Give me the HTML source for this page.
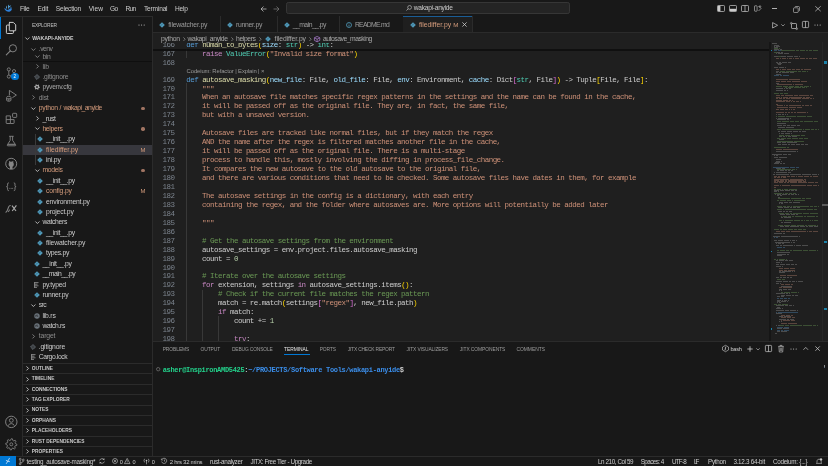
<!DOCTYPE html>
<html><head><meta charset="utf-8"><style>
html,body{margin:0;padding:0;width:828px;height:466px;overflow:hidden;background:#181818;}
body{position:relative;font-family:'Liberation Sans', sans-serif;}
svg{overflow:visible}
</style></head><body><div style="position:absolute;left:0;top:0;width:828px;height:466px;will-change:transform;overflow:hidden">
<div style="position:absolute;left:0px;top:0px;width:828px;height:16px;background:#181818;"></div><div style="position:absolute;left:0px;top:15.8px;width:828px;height:0.9px;background:#2b2b2b;"></div><div style="position:absolute;left:21.5px;top:16px;width:0.7px;height:440px;background:#2b2b2b;"></div><div style="position:absolute;left:152px;top:16px;width:0.8px;height:440px;background:#2b2b2b;"></div><div style="position:absolute;left:153px;top:32px;width:675px;height:309px;background:#1f1f1f;"></div><div style="position:absolute;left:153px;top:16px;width:675px;height:16px;background:#181818;"></div><div style="position:absolute;left:153px;top:31.5px;width:675px;height:0.7px;background:#2b2b2b;"></div><div style="position:absolute;left:153px;top:341px;width:675px;height:115px;background:#181818;"></div><div style="position:absolute;left:153px;top:340.6px;width:675px;height:0.7px;background:#2b2b2b;"></div><div style="position:absolute;left:0px;top:456px;width:828px;height:10px;background:#181818;"></div><div style="position:absolute;left:0px;top:455.6px;width:828px;height:0.6px;background:#2b2b2b;"></div><svg style="position:absolute;left:2px;top:2px;" width="12" height="12" viewBox="0 0 12 12"><path d="M2.2 6.2 Q3.2 6 4.2 7.2 Q5.2 8.4 6.6 7.6 L8.2 6.6 Q9.2 6 10 6.8 Q9.6 8.8 8 9.4 Q6.2 10 4.6 9.2 Q2.8 8.2 2.2 6.2 Z" fill="#2d7fd8"/><path d="M4.2 3.6 Q5 4.6 4.9 6.6 L4.1 6.4 Q3.9 5 4.2 3.6 Z" fill="#5fb0e8"/><path d="M6.2 2.6 Q7.4 3.4 7.2 6.2 L6.4 6.8 Q6 4.6 6.2 2.6 Z" fill="#5fb0e8"/><path d="M6.8 4.2 Q8.2 3.4 9.2 3.6 Q8.6 4.8 7.2 5.2 Z" fill="#4aa0e0"/><path d="M8.4 5.2 Q9.6 5 9.8 6 L8.6 6.6 Z" fill="#3b8fdc"/></svg><div style="position:absolute;left:19.9px;top:3.60px;height:10px;line-height:10px;font-size:6.6px;color:#cccccc;font-weight:400;font-family:'Liberation Sans', sans-serif;white-space:pre;letter-spacing:-0.312px;">File</div><div style="position:absolute;left:37.4px;top:3.60px;height:10px;line-height:10px;font-size:6.6px;color:#cccccc;font-weight:400;font-family:'Liberation Sans', sans-serif;white-space:pre;letter-spacing:-0.158px;">Edit</div><div style="position:absolute;left:55.8px;top:3.60px;height:10px;line-height:10px;font-size:6.6px;color:#cccccc;font-weight:400;font-family:'Liberation Sans', sans-serif;white-space:pre;letter-spacing:-0.219px;">Selection</div><div style="position:absolute;left:88.8px;top:3.60px;height:10px;line-height:10px;font-size:6.6px;color:#cccccc;font-weight:400;font-family:'Liberation Sans', sans-serif;white-space:pre;letter-spacing:0.004px;">View</div><div style="position:absolute;left:109.9px;top:3.60px;height:10px;line-height:10px;font-size:6.6px;color:#cccccc;font-weight:400;font-family:'Liberation Sans', sans-serif;white-space:pre;letter-spacing:-0.604px;">Go</div><div style="position:absolute;left:125.6px;top:3.60px;height:10px;line-height:10px;font-size:6.6px;color:#cccccc;font-weight:400;font-family:'Liberation Sans', sans-serif;white-space:pre;letter-spacing:-0.754px;">Run</div><div style="position:absolute;left:144px;top:3.60px;height:10px;line-height:10px;font-size:6.6px;color:#cccccc;font-weight:400;font-family:'Liberation Sans', sans-serif;white-space:pre;letter-spacing:-0.192px;">Terminal</div><div style="position:absolute;left:174.9px;top:3.60px;height:10px;line-height:10px;font-size:6.6px;color:#cccccc;font-weight:400;font-family:'Liberation Sans', sans-serif;white-space:pre;letter-spacing:-0.191px;">Help</div><svg style="position:absolute;left:260px;top:5.5px;" width="7" height="6" viewBox="0 0 7 6"><path d="M6.5 3 H1 M3.5 0.5 L1 3 L3.5 5.5" stroke="#cccccc" stroke-width="0.7" fill="none"/></svg><svg style="position:absolute;left:272.5px;top:5.5px;" width="7" height="6" viewBox="0 0 7 6"><path d="M0.5 3 H6 M3.5 0.5 L6 3 L3.5 5.5" stroke="#7f7f7f" stroke-width="0.7" fill="none"/></svg><div style="position:absolute;left:286.2px;top:2.1px;width:283.7px;height:11.9px;background:#242424;border:0.6px solid #363636;border-radius:2.2px;box-sizing:border-box;"></div><svg style="position:absolute;left:405.5px;top:5.2px;" width="6" height="6" viewBox="0 0 6 6"><circle cx="3.6" cy="2.4" r="1.9" stroke="#cccccc" stroke-width="0.6" fill="none"/><path d="M2.2 3.8 L0.5 5.5" stroke="#cccccc" stroke-width="0.7"/></svg><div style="position:absolute;left:413.8px;top:3.40px;height:10px;line-height:10px;font-size:6.6px;color:#cccccc;font-weight:400;font-family:'Liberation Sans', sans-serif;white-space:pre;letter-spacing:-0.249px;">wakapi-anyide</div><svg style="position:absolute;left:716.8px;top:5px;" width="8" height="7" viewBox="0 0 8 7"><rect x="0.5" y="0.5" width="7" height="6" rx="0.8" stroke="#cccccc" stroke-width="0.7" fill="none"/><rect x="0.8" y="0.8" width="2.6" height="5.4" fill="#cccccc"/></svg><svg style="position:absolute;left:729px;top:5px;" width="8" height="7" viewBox="0 0 8 7"><rect x="0.5" y="0.5" width="7" height="6" rx="0.8" stroke="#cccccc" stroke-width="0.7" fill="none"/><rect x="0.8" y="3.8" width="6.4" height="2.4" fill="#cccccc"/></svg><svg style="position:absolute;left:741.3px;top:5px;" width="8" height="7" viewBox="0 0 8 7"><rect x="0.5" y="0.5" width="7" height="6" rx="0.8" stroke="#cccccc" stroke-width="0.7" fill="none"/><path d="M4 0.5 V6.5" stroke="#cccccc" stroke-width="0.7"/></svg><svg style="position:absolute;left:754px;top:5px;" width="8" height="7" viewBox="0 0 8 7"><rect x="0.5" y="0.8" width="2.6" height="5.4" rx="0.5" stroke="#cccccc" stroke-width="0.6" fill="none"/><path d="M4.5 1 L7 3.5 L4.5 6" stroke="#cccccc" stroke-width="0.6" fill="none"/><circle cx="6" cy="1.5" r="0.8" stroke="#cccccc" stroke-width="0.5" fill="none"/></svg><div style="position:absolute;left:771.8px;top:8.2px;width:5.5px;height:0.5px;background:#b0b0b0;"></div><svg style="position:absolute;left:792.8px;top:5.5px;" width="7" height="7" viewBox="0 0 7 7"><rect x="0.5" y="1.8" width="4.7" height="4.7" rx="0.8" stroke="#cccccc" stroke-width="0.6" fill="none"/><path d="M1.8 1.2 Q2 0.5 2.8 0.5 H5.5 Q6.5 0.5 6.5 1.5 V4.2 Q6.5 5 5.8 5.2" stroke="#cccccc" stroke-width="0.6" fill="none"/></svg><svg style="position:absolute;left:815px;top:6px;" width="6" height="5.5" viewBox="0 0 6 5.5"><path d="M0.3 0.3 L5.7 5.2 M5.7 0.3 L0.3 5.2" stroke="#cccccc" stroke-width="0.7"/></svg><div style="position:absolute;left:0px;top:16.8px;width:1px;height:22.2px;background:#0078d4;"></div><svg style="position:absolute;left:3px;top:20px;" width="18" height="18" viewBox="0 0 18 18"><path d="M6.3 2.4 H10.3 L12.7 4.8 V10.2 Q12.7 10.8 12.1 10.8 H6.9 Q6.3 10.8 6.3 10.2 V3 Q6.3 2.4 6.9 2.4 Z" stroke="#d7d7d7" stroke-width="0.95" fill="none" stroke-linejoin="round"/><path d="M6.3 5.1 H4.2 Q3.4 5.1 3.4 5.9 V12.7 Q3.4 13.5 4.2 13.5 H9.6 Q10.4 13.5 10.4 12.7 V10.8" stroke="#d7d7d7" stroke-width="0.95" fill="none"/></svg><svg style="position:absolute;left:3px;top:42px;" width="18" height="18" viewBox="0 0 18 18"><circle cx="9.9" cy="6.3" r="3.6" stroke="#868686" stroke-width="0.95" fill="none"/><path d="M7.3 8.9 L3.3 12.9" stroke="#868686" stroke-width="1.05" stroke-linecap="round"/></svg><svg style="position:absolute;left:3px;top:64px;" width="18" height="18" viewBox="0 0 18 18"><circle cx="5.8" cy="5.4" r="1.55" stroke="#868686" stroke-width="0.85" fill="none"/><circle cx="5.8" cy="12.6" r="1.55" stroke="#868686" stroke-width="0.85" fill="none"/><circle cx="11" cy="7.1" r="1.55" stroke="#868686" stroke-width="0.85" fill="none"/><path d="M5.8 6.95 V11.05 M11 8.65 Q11 10.6 7.2 11.8" stroke="#868686" stroke-width="0.85" fill="none"/></svg><div style="position:absolute;left:11.3px;top:72.7px;width:7.4px;height:7.4px;border-radius:50%;background:#0078d4;"></div><div style="position:absolute;left:13.4px;top:73.60px;height:6px;line-height:6px;font-size:4.6px;color:#ffffff;font-weight:400;font-family:'Liberation Sans', sans-serif;white-space:pre;">2</div><svg style="position:absolute;left:3px;top:87px;" width="18" height="18" viewBox="0 0 18 18"><path d="M6.4 8.4 V3.4 L13.4 8.1 L9.4 10.7" stroke="#868686" stroke-width="0.9" fill="none" stroke-linejoin="round"/><path d="M3.6 10.6 Q3.6 9.3 5.8 9.3 Q8 9.3 8 10.6 V13 Q8 14.3 5.8 14.3 Q3.6 14.3 3.6 13 Z M3.6 11.8 H8 M5.8 11.8 V14" stroke="#868686" stroke-width="0.85" fill="none"/></svg><svg style="position:absolute;left:3px;top:109px;" width="18" height="18" viewBox="0 0 18 18"><path d="M3.2 6.9 H7.4 V14.5 H3.8 Q3.2 14.5 3.2 13.9 Z M3.2 10.6 H11.1 V13.9 Q11.1 14.5 10.5 14.5 H7.4" stroke="#868686" stroke-width="0.9" fill="none" stroke-linejoin="round"/><rect x="9.6" y="4.3" width="4.1" height="4.1" rx="0.7" stroke="#868686" stroke-width="0.9" fill="none"/></svg><svg style="position:absolute;left:3px;top:132px;" width="18" height="18" viewBox="0 0 18 18"><path d="M6.1 4.3 H10.7 M7.2 4.3 V8.4 L4.3 12.9 Q4 13.8 4.9 13.8 H12.1 Q13 13.8 12.7 12.9 L9.6 8.4 V4.3" stroke="#868686" stroke-width="0.9" fill="none" stroke-linejoin="round"/><path d="M5 12.3 H12" stroke="#868686" stroke-width="1.1"/></svg><svg style="position:absolute;left:3px;top:154px;" width="18" height="18" viewBox="0 0 18 18"><circle cx="8.2" cy="9.8" r="5.5" stroke="#868686" stroke-width="0.95" fill="none"/><path d="M6.9 15 V12.8 Q5.7 12.3 5.6 10.6 Q5.5 9.4 6.1 8.7 Q5.9 7.8 6.2 7.1 Q6.9 7.1 7.5 7.7 Q8.2 7.5 8.9 7.7 Q9.5 7.1 10.2 7.1 Q10.5 7.8 10.3 8.7 Q10.9 9.4 10.8 10.6 Q10.7 12.3 9.5 12.8 V15 Z" fill="#868686"/></svg><svg style="position:absolute;left:3px;top:177px;" width="18" height="18" viewBox="0 0 18 18"><path d="M5.8 5.8 Q4.6 5.8 4.6 7 V8.8 Q4.6 9.7 3.5 9.7 Q4.6 9.7 4.6 10.6 V12.5 Q4.6 13.7 5.8 13.7 M10.8 5.8 Q12 5.8 12 7 V8.8 Q12 9.7 13.1 9.7 Q12 9.7 12 10.6 V12.5 Q12 13.7 10.8 13.7" stroke="#868686" stroke-width="0.9" fill="none"/><path d="M6.4 11.4 H10.4" stroke="#868686" stroke-width="0.8" stroke-dasharray="0.9 0.5"/></svg><svg style="position:absolute;left:3px;top:199px;" width="18" height="18" viewBox="0 0 18 18"><path d="M2.6 13.4 Q3.6 13 4.4 11.2 L5.6 8 Q6.3 6.4 7.7 6.6 M5 12.8 Q6 12.2 6.6 10.6" stroke="#868686" stroke-width="1.05" fill="none"/><path d="M9 6.6 L13 12 M13.4 6.4 L9.2 12" stroke="#a8a8a8" stroke-width="1.15"/></svg><svg style="position:absolute;left:3px;top:413px;" width="18" height="18" viewBox="0 0 18 18"><circle cx="8.3" cy="8.9" r="5.7" stroke="#868686" stroke-width="0.95" fill="none"/><circle cx="8.3" cy="7.4" r="1.9" stroke="#868686" stroke-width="0.9" fill="none"/><path d="M5.3 12.7 Q5.9 10.6 8.3 10.6 Q10.7 10.6 11.3 12.7" stroke="#868686" stroke-width="0.9" fill="none"/></svg><svg style="position:absolute;left:3px;top:435px;" width="18" height="18" viewBox="0 0 18 18"><polygon points="8.30,3.70 9.39,3.81 9.87,5.51 10.58,5.89 12.26,5.34 12.96,6.19 12.09,7.73 12.32,8.50 13.90,9.30 13.79,10.39 12.09,10.87 11.71,11.58 12.26,13.26 11.41,13.96 9.87,13.09 9.10,13.32 8.30,14.90 7.21,14.79 6.73,13.09 6.02,12.71 4.34,13.26 3.64,12.41 4.51,10.87 4.28,10.10 2.70,9.30 2.81,8.21 4.51,7.73 4.89,7.02 4.34,5.34 5.19,4.64 6.73,5.51 7.50,5.28" stroke="#868686" stroke-width="0.85" fill="none" stroke-linejoin="round"/><circle cx="8.3" cy="9.3" r="1.5" stroke="#868686" stroke-width="0.85" fill="none"/></svg><div style="position:absolute;left:32px;top:21.00px;height:10px;line-height:10px;font-size:4.9px;color:#c0c0c0;font-weight:400;font-family:'Liberation Sans', sans-serif;white-space:pre;letter-spacing:-0.241px;">EXPLORER</div><svg style="position:absolute;left:138.4px;top:24.0px;" width="7.2" height="2" viewBox="0 0 7.2 2"><circle cx="1" cy="1" r="0.55" fill="#cccccc"/><circle cx="3.6" cy="1" r="0.55" fill="#cccccc"/><circle cx="6.2" cy="1" r="0.55" fill="#cccccc"/></svg><svg style="position:absolute;left:24.8px;top:37.0px;" width="5" height="3" viewBox="0 0 5 3"><path d="M0.4 0.5 L2.4 2.5 L4.4 0.5" stroke="#cccccc" stroke-width="0.85" fill="none"/></svg><div style="position:absolute;left:32.3px;top:32.90px;height:10px;line-height:10px;font-size:5.2px;color:#cccccc;font-weight:700;font-family:'Liberation Sans', sans-serif;white-space:pre;letter-spacing:-0.082px;">WAKAPI-ANYIDE</div><div style="position:absolute;left:22.5px;top:44px;width:129.5px;height:17.2px;background:#181818;"></div><svg style="position:absolute;left:31.200000000000003px;top:47.7px;" width="5" height="3" viewBox="0 0 5 3"><path d="M0.4 0.5 L2.4 2.5 L4.4 0.5" stroke="#8c8c8c" stroke-width="0.85" fill="none"/></svg><div style="position:absolute;left:38.8px;top:44.20px;height:10px;line-height:10px;font-size:6.8px;color:#8c8c8c;font-weight:400;font-family:'Liberation Sans', sans-serif;white-space:pre;letter-spacing:-0.538px;">.venv</div><svg style="position:absolute;left:35.1px;top:55.1px;" width="5" height="3" viewBox="0 0 5 3"><path d="M0.4 0.5 L2.4 2.5 L4.4 0.5" stroke="#8c8c8c" stroke-width="0.85" fill="none"/></svg><div style="position:absolute;left:42.4px;top:51.60px;height:10px;line-height:10px;font-size:6.8px;color:#8c8c8c;font-weight:400;font-family:'Liberation Sans', sans-serif;white-space:pre;letter-spacing:-0.287px;">bin</div><div style="position:absolute;left:22.5px;top:61.2px;width:129.5px;height:1.0px;background:#0f0f0f;"></div><svg style="position:absolute;left:35.8px;top:64.19999999999999px;" width="3" height="5" viewBox="0 0 3 5"><path d="M0.5 0.4 L2.5 2.4 L0.5 4.4" stroke="#8c8c8c" stroke-width="0.85" fill="none"/></svg><div style="position:absolute;left:42.4px;top:61.60px;height:10px;line-height:10px;font-size:6.8px;color:#8c8c8c;font-weight:400;font-family:'Liberation Sans', sans-serif;white-space:pre;letter-spacing:-0.052px;">lib</div><svg style="position:absolute;left:33.6px;top:73.97999999999999px;" width="6" height="6" viewBox="0 0 6 6"><path d="M3 0.6 L5.4 3 L3 5.4 L0.6 3 Z" stroke="#7d8790" stroke-width="0.8" fill="none"/><circle cx="3" cy="3" r="0.7" fill="#7d8790"/></svg><div style="position:absolute;left:42.4px;top:71.98px;height:10px;line-height:10px;font-size:6.8px;color:#8c8c8c;font-weight:400;font-family:'Liberation Sans', sans-serif;white-space:pre;letter-spacing:-0.197px;">.gitignore</div><svg style="position:absolute;left:33.6px;top:84.36px;" width="6" height="6" viewBox="0 0 6 6"><polygon points="5.90,3.00 5.80,3.75 4.82,4.05 4.48,4.48 4.45,5.51 3.75,5.80 3.00,5.10 2.46,5.03 1.55,5.51 0.95,5.05 1.18,4.05 0.97,3.54 0.10,3.00 0.20,2.25 1.18,1.95 1.52,1.52 1.55,0.49 2.25,0.20 3.00,0.90 3.54,0.97 4.45,0.49 5.05,0.95 4.82,1.95 5.03,2.46" fill="#a8a8a8"/><circle cx="3" cy="3" r="0.9" fill="#181818"/></svg><div style="position:absolute;left:42.4px;top:82.36px;height:10px;line-height:10px;font-size:6.8px;color:#a8a8a8;font-weight:400;font-family:'Liberation Sans', sans-serif;white-space:pre;letter-spacing:-0.278px;">pyvenv.cfg</div><svg style="position:absolute;left:32.199999999999996px;top:95.33999999999999px;" width="3" height="5" viewBox="0 0 3 5"><path d="M0.5 0.4 L2.5 2.4 L0.5 4.4" stroke="#8c8c8c" stroke-width="0.85" fill="none"/></svg><div style="position:absolute;left:38.8px;top:92.74px;height:10px;line-height:10px;font-size:6.8px;color:#8c8c8c;font-weight:400;font-family:'Liberation Sans', sans-serif;white-space:pre;letter-spacing:-0.227px;">dist</div><svg style="position:absolute;left:31.299999999999997px;top:106.62px;" width="5" height="3" viewBox="0 0 5 3"><path d="M0.4 0.5 L2.4 2.5 L4.4 0.5" stroke="#cccccc" stroke-width="0.85" fill="none"/></svg><div style="position:absolute;left:38.8px;top:103.12px;height:10px;line-height:10px;font-size:6.8px;color:#d59c7c;font-weight:400;font-family:'Liberation Sans', sans-serif;white-space:pre;letter-spacing:-0.223px;">python</div><div style="position:absolute;left:59.4px;top:103.12px;height:10px;line-height:10px;font-size:6.8px;color:#d59c7c;font-weight:400;font-family:'Liberation Sans', sans-serif;white-space:pre;">/</div><div style="position:absolute;left:63.4px;top:103.12px;height:10px;line-height:10px;font-size:6.8px;color:#d59c7c;font-weight:400;font-family:'Liberation Sans', sans-serif;white-space:pre;letter-spacing:-0.499px;">wakapi_anyide</div><div style="position:absolute;left:141.3px;top:106.52px;width:3.3px;height:3.3px;border-radius:50%;background:#a07462"></div><svg style="position:absolute;left:35.8px;top:116.1px;" width="3" height="5" viewBox="0 0 3 5"><path d="M0.5 0.4 L2.5 2.4 L0.5 4.4" stroke="#cccccc" stroke-width="0.85" fill="none"/></svg><div style="position:absolute;left:42.4px;top:113.50px;height:10px;line-height:10px;font-size:6.8px;color:#cccccc;font-weight:400;font-family:'Liberation Sans', sans-serif;white-space:pre;letter-spacing:-0.379px;">_rust</div><svg style="position:absolute;left:34.9px;top:127.38px;" width="5" height="3" viewBox="0 0 5 3"><path d="M0.4 0.5 L2.4 2.5 L4.4 0.5" stroke="#cccccc" stroke-width="0.85" fill="none"/></svg><div style="position:absolute;left:42.4px;top:123.88px;height:10px;line-height:10px;font-size:6.8px;color:#d59c7c;font-weight:400;font-family:'Liberation Sans', sans-serif;white-space:pre;letter-spacing:-0.317px;">helpers</div><div style="position:absolute;left:141.3px;top:127.28px;width:3.3px;height:3.3px;border-radius:50%;background:#a07462"></div><svg style="position:absolute;left:37.449999999999996px;top:136.26px;" width="6" height="6" viewBox="0 0 6 6"><path d="M3 0.2 L5.8 3 L3 5.8 L0.2 3 Z" fill="#519aba"/><path d="M1.6 3.9 L3.9 1.6" stroke="#2b5a70" stroke-width="0.6"/></svg><div style="position:absolute;left:46.05px;top:134.26px;height:10px;line-height:10px;font-size:6.8px;color:#cccccc;font-weight:400;font-family:'Liberation Sans', sans-serif;white-space:pre;letter-spacing:-0.384px;">__init__.py</div><div style="position:absolute;left:22.5px;top:144.73999999999998px;width:129.5px;height:9.8px;background:#37373d;"></div><svg style="position:absolute;left:37.449999999999996px;top:146.64px;" width="6" height="6" viewBox="0 0 6 6"><path d="M3 0.2 L5.8 3 L3 5.8 L0.2 3 Z" fill="#519aba"/><path d="M1.6 3.9 L3.9 1.6" stroke="#2b5a70" stroke-width="0.6"/></svg><div style="position:absolute;left:46.05px;top:144.64px;height:10px;line-height:10px;font-size:6.8px;color:#d59c7c;font-weight:400;font-family:'Liberation Sans', sans-serif;white-space:pre;letter-spacing:-0.019px;">filediffer.py</div><div style="position:absolute;left:140.4px;top:144.84px;height:10px;line-height:10px;font-size:5.9px;color:#d59c7c;font-weight:400;font-family:'Liberation Sans', sans-serif;white-space:pre;">M</div><svg style="position:absolute;left:37.449999999999996px;top:157.01999999999998px;" width="6" height="6" viewBox="0 0 6 6"><path d="M3 0.2 L5.8 3 L3 5.8 L0.2 3 Z" fill="#519aba"/><path d="M1.6 3.9 L3.9 1.6" stroke="#2b5a70" stroke-width="0.6"/></svg><div style="position:absolute;left:46.05px;top:155.02px;height:10px;line-height:10px;font-size:6.8px;color:#cccccc;font-weight:400;font-family:'Liberation Sans', sans-serif;white-space:pre;letter-spacing:-0.225px;">ini.py</div><svg style="position:absolute;left:34.9px;top:168.9px;" width="5" height="3" viewBox="0 0 5 3"><path d="M0.4 0.5 L2.4 2.5 L4.4 0.5" stroke="#cccccc" stroke-width="0.85" fill="none"/></svg><div style="position:absolute;left:42.4px;top:165.40px;height:10px;line-height:10px;font-size:6.8px;color:#d59c7c;font-weight:400;font-family:'Liberation Sans', sans-serif;white-space:pre;letter-spacing:-0.304px;">models</div><div style="position:absolute;left:141.3px;top:168.80px;width:3.3px;height:3.3px;border-radius:50%;background:#a07462"></div><svg style="position:absolute;left:37.449999999999996px;top:177.78px;" width="6" height="6" viewBox="0 0 6 6"><path d="M3 0.2 L5.8 3 L3 5.8 L0.2 3 Z" fill="#519aba"/><path d="M1.6 3.9 L3.9 1.6" stroke="#2b5a70" stroke-width="0.6"/></svg><div style="position:absolute;left:46.05px;top:175.78px;height:10px;line-height:10px;font-size:6.8px;color:#cccccc;font-weight:400;font-family:'Liberation Sans', sans-serif;white-space:pre;letter-spacing:-0.384px;">__init__.py</div><svg style="position:absolute;left:37.449999999999996px;top:188.16px;" width="6" height="6" viewBox="0 0 6 6"><path d="M3 0.2 L5.8 3 L3 5.8 L0.2 3 Z" fill="#519aba"/><path d="M1.6 3.9 L3.9 1.6" stroke="#2b5a70" stroke-width="0.6"/></svg><div style="position:absolute;left:46.05px;top:186.16px;height:10px;line-height:10px;font-size:6.8px;color:#d59c7c;font-weight:400;font-family:'Liberation Sans', sans-serif;white-space:pre;letter-spacing:-0.171px;">config.py</div><div style="position:absolute;left:140.4px;top:186.36px;height:10px;line-height:10px;font-size:5.9px;color:#d59c7c;font-weight:400;font-family:'Liberation Sans', sans-serif;white-space:pre;">M</div><svg style="position:absolute;left:37.449999999999996px;top:198.54px;" width="6" height="6" viewBox="0 0 6 6"><path d="M3 0.2 L5.8 3 L3 5.8 L0.2 3 Z" fill="#519aba"/><path d="M1.6 3.9 L3.9 1.6" stroke="#2b5a70" stroke-width="0.6"/></svg><div style="position:absolute;left:46.05px;top:196.54px;height:10px;line-height:10px;font-size:6.8px;color:#cccccc;font-weight:400;font-family:'Liberation Sans', sans-serif;white-space:pre;letter-spacing:-0.203px;">environment.py</div><svg style="position:absolute;left:37.449999999999996px;top:208.92000000000002px;" width="6" height="6" viewBox="0 0 6 6"><path d="M3 0.2 L5.8 3 L3 5.8 L0.2 3 Z" fill="#519aba"/><path d="M1.6 3.9 L3.9 1.6" stroke="#2b5a70" stroke-width="0.6"/></svg><div style="position:absolute;left:46.05px;top:206.92px;height:10px;line-height:10px;font-size:6.8px;color:#cccccc;font-weight:400;font-family:'Liberation Sans', sans-serif;white-space:pre;letter-spacing:-0.192px;">project.py</div><svg style="position:absolute;left:34.9px;top:220.8px;" width="5" height="3" viewBox="0 0 5 3"><path d="M0.4 0.5 L2.4 2.5 L4.4 0.5" stroke="#cccccc" stroke-width="0.85" fill="none"/></svg><div style="position:absolute;left:42.4px;top:217.30px;height:10px;line-height:10px;font-size:6.8px;color:#cccccc;font-weight:400;font-family:'Liberation Sans', sans-serif;white-space:pre;letter-spacing:-0.316px;">watchers</div><svg style="position:absolute;left:37.449999999999996px;top:229.68px;" width="6" height="6" viewBox="0 0 6 6"><path d="M3 0.2 L5.8 3 L3 5.8 L0.2 3 Z" fill="#519aba"/><path d="M1.6 3.9 L3.9 1.6" stroke="#2b5a70" stroke-width="0.6"/></svg><div style="position:absolute;left:46.05px;top:227.68px;height:10px;line-height:10px;font-size:6.8px;color:#cccccc;font-weight:400;font-family:'Liberation Sans', sans-serif;white-space:pre;letter-spacing:-0.384px;">__init__.py</div><svg style="position:absolute;left:37.449999999999996px;top:240.06px;" width="6" height="6" viewBox="0 0 6 6"><path d="M3 0.2 L5.8 3 L3 5.8 L0.2 3 Z" fill="#519aba"/><path d="M1.6 3.9 L3.9 1.6" stroke="#2b5a70" stroke-width="0.6"/></svg><div style="position:absolute;left:46.05px;top:238.06px;height:10px;line-height:10px;font-size:6.8px;color:#cccccc;font-weight:400;font-family:'Liberation Sans', sans-serif;white-space:pre;letter-spacing:-0.142px;">filewatcher.py</div><svg style="position:absolute;left:37.449999999999996px;top:250.44px;" width="6" height="6" viewBox="0 0 6 6"><path d="M3 0.2 L5.8 3 L3 5.8 L0.2 3 Z" fill="#519aba"/><path d="M1.6 3.9 L3.9 1.6" stroke="#2b5a70" stroke-width="0.6"/></svg><div style="position:absolute;left:46.05px;top:248.44px;height:10px;line-height:10px;font-size:6.8px;color:#cccccc;font-weight:400;font-family:'Liberation Sans', sans-serif;white-space:pre;letter-spacing:-0.296px;">types.py</div><svg style="position:absolute;left:33.8px;top:260.82000000000005px;" width="6" height="6" viewBox="0 0 6 6"><path d="M3 0.2 L5.8 3 L3 5.8 L0.2 3 Z" fill="#519aba"/><path d="M1.6 3.9 L3.9 1.6" stroke="#2b5a70" stroke-width="0.6"/></svg><div style="position:absolute;left:42.4px;top:258.82px;height:10px;line-height:10px;font-size:6.8px;color:#cccccc;font-weight:400;font-family:'Liberation Sans', sans-serif;white-space:pre;letter-spacing:-0.339px;">__init__.py</div><svg style="position:absolute;left:33.8px;top:271.20000000000005px;" width="6" height="6" viewBox="0 0 6 6"><path d="M3 0.2 L5.8 3 L3 5.8 L0.2 3 Z" fill="#519aba"/><path d="M1.6 3.9 L3.9 1.6" stroke="#2b5a70" stroke-width="0.6"/></svg><div style="position:absolute;left:42.4px;top:269.20px;height:10px;line-height:10px;font-size:6.8px;color:#cccccc;font-weight:400;font-family:'Liberation Sans', sans-serif;white-space:pre;letter-spacing:-0.564px;">__main__.py</div><svg style="position:absolute;left:34.3px;top:281.58000000000004px;" width="5" height="6" viewBox="0 0 5 6"><path d="M0.6 0.6 H4.5 M0.6 2.2 H3.5 M0.6 3.8 H4.5 M0.6 5.4 H3" stroke="#8a8a8a" stroke-width="0.9"/><path d="M0.6 0 V6" stroke="#8a8a8a" stroke-width="1"/></svg><div style="position:absolute;left:42.4px;top:279.58px;height:10px;line-height:10px;font-size:6.8px;color:#cccccc;font-weight:400;font-family:'Liberation Sans', sans-serif;white-space:pre;letter-spacing:-0.214px;">py.typed</div><svg style="position:absolute;left:33.8px;top:291.96000000000004px;" width="6" height="6" viewBox="0 0 6 6"><path d="M3 0.2 L5.8 3 L3 5.8 L0.2 3 Z" fill="#519aba"/><path d="M1.6 3.9 L3.9 1.6" stroke="#2b5a70" stroke-width="0.6"/></svg><div style="position:absolute;left:42.4px;top:289.96px;height:10px;line-height:10px;font-size:6.8px;color:#cccccc;font-weight:400;font-family:'Liberation Sans', sans-serif;white-space:pre;letter-spacing:-0.269px;">runner.py</div><svg style="position:absolute;left:31.299999999999997px;top:303.84000000000003px;" width="5" height="3" viewBox="0 0 5 3"><path d="M0.4 0.5 L2.4 2.5 L4.4 0.5" stroke="#cccccc" stroke-width="0.85" fill="none"/></svg><div style="position:absolute;left:38.8px;top:300.34px;height:10px;line-height:10px;font-size:6.8px;color:#cccccc;font-weight:400;font-family:'Liberation Sans', sans-serif;white-space:pre;letter-spacing:-0.582px;">src</div><svg style="position:absolute;left:33.6px;top:312.72px;" width="6" height="6" viewBox="0 0 6 6"><circle cx="3" cy="3" r="2.7" fill="#6f7880"/><path d="M1.6 2.2 H4.2 M1.9 2.2 V4.2 M3.3 3 L4.3 4.2" stroke="#1a1a1a" stroke-width="0.6" fill="none"/></svg><div style="position:absolute;left:42.4px;top:310.72px;height:10px;line-height:10px;font-size:6.8px;color:#cccccc;font-weight:400;font-family:'Liberation Sans', sans-serif;white-space:pre;letter-spacing:-0.192px;">lib.rs</div><svg style="position:absolute;left:33.6px;top:323.1px;" width="6" height="6" viewBox="0 0 6 6"><circle cx="3" cy="3" r="2.7" fill="#6f7880"/><path d="M1.6 2.2 H4.2 M1.9 2.2 V4.2 M3.3 3 L4.3 4.2" stroke="#1a1a1a" stroke-width="0.6" fill="none"/></svg><div style="position:absolute;left:42.4px;top:321.10px;height:10px;line-height:10px;font-size:6.8px;color:#cccccc;font-weight:400;font-family:'Liberation Sans', sans-serif;white-space:pre;letter-spacing:-0.331px;">watch.rs</div><svg style="position:absolute;left:32.199999999999996px;top:334.08000000000004px;" width="3" height="5" viewBox="0 0 3 5"><path d="M0.5 0.4 L2.5 2.4 L0.5 4.4" stroke="#8c8c8c" stroke-width="0.85" fill="none"/></svg><div style="position:absolute;left:38.8px;top:331.48px;height:10px;line-height:10px;font-size:6.8px;color:#8c8c8c;font-weight:400;font-family:'Liberation Sans', sans-serif;white-space:pre;letter-spacing:-0.138px;">target</div><svg style="position:absolute;left:30.0px;top:343.86px;" width="6" height="6" viewBox="0 0 6 6"><path d="M3 0.6 L5.4 3 L3 5.4 L0.6 3 Z" stroke="#7d8790" stroke-width="0.8" fill="none"/><circle cx="3" cy="3" r="0.7" fill="#7d8790"/></svg><div style="position:absolute;left:38.8px;top:341.86px;height:10px;line-height:10px;font-size:6.8px;color:#cccccc;font-weight:400;font-family:'Liberation Sans', sans-serif;white-space:pre;letter-spacing:-0.175px;">.gitignore</div><svg style="position:absolute;left:30.699999999999996px;top:354.24px;" width="5" height="6" viewBox="0 0 5 6"><path d="M0.6 0.6 H4.5 M0.6 2.2 H3.5 M0.6 3.8 H4.5 M0.6 5.4 H3" stroke="#8a8a8a" stroke-width="0.9"/><path d="M0.6 0 V6" stroke="#8a8a8a" stroke-width="1"/></svg><div style="position:absolute;left:38.8px;top:352.24px;height:10px;line-height:10px;font-size:6.8px;color:#cccccc;font-weight:400;font-family:'Liberation Sans', sans-serif;white-space:pre;letter-spacing:-0.400px;">Cargo.lock</div><div style="position:absolute;left:35.4px;top:134px;width:0.6px;height:31px;background:#3a3a3a;"></div><div style="position:absolute;left:22.5px;top:363.0px;width:129.5px;height:0.7px;background:#2b2b2b;"></div><svg style="position:absolute;left:26.1px;top:366.20000000000005px;" width="3" height="5" viewBox="0 0 3 5"><path d="M0.5 0.4 L2.5 2.4 L0.5 4.4" stroke="#cccccc" stroke-width="0.85" fill="none"/></svg><div style="position:absolute;left:31.8px;top:363.90px;height:10px;line-height:10px;font-size:4.85px;color:#cccccc;font-weight:700;font-family:'Liberation Sans', sans-serif;white-space:pre;">OUTLINE</div><div style="position:absolute;left:22.5px;top:373.38px;width:129.5px;height:0.7px;background:#2b2b2b;"></div><svg style="position:absolute;left:26.1px;top:376.58000000000004px;" width="3" height="5" viewBox="0 0 3 5"><path d="M0.5 0.4 L2.5 2.4 L0.5 4.4" stroke="#cccccc" stroke-width="0.85" fill="none"/></svg><div style="position:absolute;left:31.8px;top:374.28px;height:10px;line-height:10px;font-size:4.85px;color:#cccccc;font-weight:700;font-family:'Liberation Sans', sans-serif;white-space:pre;">TIMELINE</div><div style="position:absolute;left:22.5px;top:383.76px;width:129.5px;height:0.7px;background:#2b2b2b;"></div><svg style="position:absolute;left:26.1px;top:386.96000000000004px;" width="3" height="5" viewBox="0 0 3 5"><path d="M0.5 0.4 L2.5 2.4 L0.5 4.4" stroke="#cccccc" stroke-width="0.85" fill="none"/></svg><div style="position:absolute;left:31.8px;top:384.66px;height:10px;line-height:10px;font-size:4.85px;color:#cccccc;font-weight:700;font-family:'Liberation Sans', sans-serif;white-space:pre;">CONNECTIONS</div><div style="position:absolute;left:22.5px;top:394.14px;width:129.5px;height:0.7px;background:#2b2b2b;"></div><svg style="position:absolute;left:26.1px;top:397.34000000000003px;" width="3" height="5" viewBox="0 0 3 5"><path d="M0.5 0.4 L2.5 2.4 L0.5 4.4" stroke="#cccccc" stroke-width="0.85" fill="none"/></svg><div style="position:absolute;left:31.8px;top:395.04px;height:10px;line-height:10px;font-size:4.85px;color:#cccccc;font-weight:700;font-family:'Liberation Sans', sans-serif;white-space:pre;">TAG EXPLORER</div><div style="position:absolute;left:22.5px;top:404.52px;width:129.5px;height:0.7px;background:#2b2b2b;"></div><svg style="position:absolute;left:26.1px;top:407.72px;" width="3" height="5" viewBox="0 0 3 5"><path d="M0.5 0.4 L2.5 2.4 L0.5 4.4" stroke="#cccccc" stroke-width="0.85" fill="none"/></svg><div style="position:absolute;left:31.8px;top:405.42px;height:10px;line-height:10px;font-size:4.85px;color:#cccccc;font-weight:700;font-family:'Liberation Sans', sans-serif;white-space:pre;">NOTES</div><div style="position:absolute;left:22.5px;top:414.9px;width:129.5px;height:0.7px;background:#2b2b2b;"></div><svg style="position:absolute;left:26.1px;top:418.1px;" width="3" height="5" viewBox="0 0 3 5"><path d="M0.5 0.4 L2.5 2.4 L0.5 4.4" stroke="#cccccc" stroke-width="0.85" fill="none"/></svg><div style="position:absolute;left:31.8px;top:415.80px;height:10px;line-height:10px;font-size:4.85px;color:#cccccc;font-weight:700;font-family:'Liberation Sans', sans-serif;white-space:pre;">ORPHANS</div><div style="position:absolute;left:22.5px;top:425.28px;width:129.5px;height:0.7px;background:#2b2b2b;"></div><svg style="position:absolute;left:26.1px;top:428.48px;" width="3" height="5" viewBox="0 0 3 5"><path d="M0.5 0.4 L2.5 2.4 L0.5 4.4" stroke="#cccccc" stroke-width="0.85" fill="none"/></svg><div style="position:absolute;left:31.8px;top:426.18px;height:10px;line-height:10px;font-size:4.85px;color:#cccccc;font-weight:700;font-family:'Liberation Sans', sans-serif;white-space:pre;">PLACEHOLDERS</div><div style="position:absolute;left:22.5px;top:435.66px;width:129.5px;height:0.7px;background:#2b2b2b;"></div><svg style="position:absolute;left:26.1px;top:438.86000000000007px;" width="3" height="5" viewBox="0 0 3 5"><path d="M0.5 0.4 L2.5 2.4 L0.5 4.4" stroke="#cccccc" stroke-width="0.85" fill="none"/></svg><div style="position:absolute;left:31.8px;top:436.56px;height:10px;line-height:10px;font-size:4.85px;color:#cccccc;font-weight:700;font-family:'Liberation Sans', sans-serif;white-space:pre;">RUST DEPENDENCIES</div><div style="position:absolute;left:22.5px;top:446.04px;width:129.5px;height:0.7px;background:#2b2b2b;"></div><svg style="position:absolute;left:26.1px;top:449.24000000000007px;" width="3" height="5" viewBox="0 0 3 5"><path d="M0.5 0.4 L2.5 2.4 L0.5 4.4" stroke="#cccccc" stroke-width="0.85" fill="none"/></svg><div style="position:absolute;left:31.8px;top:446.94px;height:10px;line-height:10px;font-size:4.85px;color:#cccccc;font-weight:700;font-family:'Liberation Sans', sans-serif;white-space:pre;">PROPERTIES</div><svg style="position:absolute;left:159.2px;top:21.8px;" width="6" height="6" viewBox="0 0 6 6"><path d="M3 0.2 L5.8 3 L3 5.8 L0.2 3 Z" fill="#519aba"/><path d="M1.6 3.9 L3.9 1.6" stroke="#2b5a70" stroke-width="0.6"/></svg><div style="position:absolute;left:168.3px;top:19.80px;height:10px;line-height:10px;font-size:6.8px;color:#9d9d9d;font-weight:400;font-family:'Liberation Sans', sans-serif;white-space:pre;letter-spacing:-0.154px;">filewatcher.py</div><div style="position:absolute;left:219.89999999999998px;top:16px;width:0.7px;height:15.6px;background:#2b2b2b;"></div><svg style="position:absolute;left:227px;top:21.8px;" width="6" height="6" viewBox="0 0 6 6"><path d="M3 0.2 L5.8 3 L3 5.8 L0.2 3 Z" fill="#519aba"/><path d="M1.6 3.9 L3.9 1.6" stroke="#2b5a70" stroke-width="0.6"/></svg><div style="position:absolute;left:235.9px;top:19.80px;height:10px;line-height:10px;font-size:6.8px;color:#9d9d9d;font-weight:400;font-family:'Liberation Sans', sans-serif;white-space:pre;letter-spacing:-0.232px;">runner.py</div><div style="position:absolute;left:276.5px;top:16px;width:0.7px;height:15.6px;background:#2b2b2b;"></div><svg style="position:absolute;left:284.1px;top:21.8px;" width="6" height="6" viewBox="0 0 6 6"><path d="M3 0.2 L5.8 3 L3 5.8 L0.2 3 Z" fill="#519aba"/><path d="M1.6 3.9 L3.9 1.6" stroke="#2b5a70" stroke-width="0.6"/></svg><div style="position:absolute;left:292.7px;top:19.80px;height:10px;line-height:10px;font-size:6.8px;color:#9d9d9d;font-weight:400;font-family:'Liberation Sans', sans-serif;white-space:pre;letter-spacing:-0.514px;">__main__.py</div><div style="position:absolute;left:339.2px;top:16px;width:0.7px;height:15.6px;background:#2b2b2b;"></div><svg style="position:absolute;left:345.5px;top:21.8px;" width="6" height="6" viewBox="0 0 6 6"><circle cx="3" cy="3" r="2.5" stroke="#519aba" stroke-width="0.8" fill="none"/><path d="M3 2.6 V4.6" stroke="#519aba" stroke-width="0.8"/><circle cx="3" cy="1.6" r="0.4" fill="#519aba"/></svg><div style="position:absolute;left:354.9px;top:19.80px;height:10px;line-height:10px;font-size:6.8px;color:#9d9d9d;font-weight:400;font-family:'Liberation Sans', sans-serif;white-space:pre;letter-spacing:-0.679px;">README.md</div><div style="position:absolute;left:402.8px;top:16px;width:0.7px;height:15.6px;background:#2b2b2b;"></div><div style="position:absolute;left:403.1px;top:16px;width:68.8px;height:16.2px;background:#1f1f1f;"></div><div style="position:absolute;left:403.1px;top:16.1px;width:68.8px;height:1.3px;background:#1a5d96;"></div><div style="position:absolute;left:471.6px;top:16px;width:0.7px;height:15.6px;background:#2b2b2b;"></div><svg style="position:absolute;left:409.7px;top:21.8px;" width="6" height="6" viewBox="0 0 6 6"><path d="M3 0.2 L5.8 3 L3 5.8 L0.2 3 Z" fill="#519aba"/><path d="M1.6 3.9 L3.9 1.6" stroke="#2b5a70" stroke-width="0.6"/></svg><div style="position:absolute;left:418.9px;top:19.80px;height:10px;line-height:10px;font-size:6.8px;color:#d59c7c;font-weight:400;font-family:'Liberation Sans', sans-serif;white-space:pre;letter-spacing:-0.007px;">filediffer.py</div><div style="position:absolute;left:453.2px;top:20.00px;height:10px;line-height:10px;font-size:6.2px;color:#d59c7c;font-weight:400;font-family:'Liberation Sans', sans-serif;white-space:pre;">M</div><svg style="position:absolute;left:461.8px;top:22.3px;" width="5" height="5" viewBox="0 0 5 5"><path d="M0.4 0.4 L4.6 4.6 M4.6 0.4 L0.4 4.6" stroke="#cccccc" stroke-width="0.8"/></svg><svg style="position:absolute;left:771.9px;top:21.8px;" width="6" height="7" viewBox="0 0 6 7"><path d="M0.6 0.6 L5.6 3.3 L0.6 6 Z" stroke="#cccccc" stroke-width="0.7" fill="none" stroke-linejoin="round"/></svg><svg style="position:absolute;left:780.5px;top:23.6px;" width="4" height="2.5" viewBox="0 0 4 2.5"><path d="M0.3 0.3 L2 2 L3.7 0.3" stroke="#cccccc" stroke-width="0.6" fill="none"/></svg><svg style="position:absolute;left:789.6px;top:21.5px;" width="8" height="8" viewBox="0 0 8 8"><rect x="1.5" y="1.5" width="5" height="5" rx="0.6" stroke="#cccccc" stroke-width="0.7" fill="none"/><circle cx="1.3" cy="1.3" r="0.9" stroke="#cccccc" stroke-width="0.5" fill="none"/><circle cx="6.7" cy="6.7" r="0.9" stroke="#cccccc" stroke-width="0.5" fill="none"/></svg><svg style="position:absolute;left:802.3px;top:21px;" width="7" height="7" viewBox="0 0 7 7"><rect x="0.4" y="0.4" width="6.2" height="6.2" rx="0.8" stroke="#cccccc" stroke-width="0.7" fill="none"/><path d="M3.5 0.4 V6.6" stroke="#cccccc" stroke-width="0.7"/></svg><svg style="position:absolute;left:814.3px;top:23.7px;" width="7.2" height="2" viewBox="0 0 7.2 2"><circle cx="1" cy="1" r="0.55" fill="#cccccc"/><circle cx="3.6" cy="1" r="0.55" fill="#cccccc"/><circle cx="6.2" cy="1" r="0.55" fill="#cccccc"/></svg><div style="position:absolute;left:161px;top:34.00px;height:10px;line-height:10px;font-size:6.8px;color:#a9a9a9;font-weight:400;font-family:'Liberation Sans', sans-serif;white-space:pre;letter-spacing:-0.283px;">python</div><svg style="position:absolute;left:182.89999999999998px;top:36.5px;" width="3" height="4.5" viewBox="0 0 3 4.5"><path d="M0.4 0.4 L2.2 2.2 L0.4 4" stroke="#a9a9a9" stroke-width="0.6" fill="none"/></svg><div style="position:absolute;left:187.5px;top:34.00px;height:10px;line-height:10px;font-size:6.8px;color:#a9a9a9;font-weight:400;font-family:'Liberation Sans', sans-serif;white-space:pre;letter-spacing:-0.374px;">wakapi_anyide</div><svg style="position:absolute;left:231.2px;top:36.5px;" width="3" height="4.5" viewBox="0 0 3 4.5"><path d="M0.4 0.4 L2.2 2.2 L0.4 4" stroke="#a9a9a9" stroke-width="0.6" fill="none"/></svg><div style="position:absolute;left:236px;top:34.00px;height:10px;line-height:10px;font-size:6.8px;color:#a9a9a9;font-weight:400;font-family:'Liberation Sans', sans-serif;white-space:pre;letter-spacing:-0.384px;">helpers</div><svg style="position:absolute;left:259.0px;top:36.5px;" width="3" height="4.5" viewBox="0 0 3 4.5"><path d="M0.4 0.4 L2.2 2.2 L0.4 4" stroke="#a9a9a9" stroke-width="0.6" fill="none"/></svg><svg style="position:absolute;left:265.3px;top:35.6px;" width="6" height="6" viewBox="0 0 6 6"><path d="M3 0.2 L5.8 3 L3 5.8 L0.2 3 Z" fill="#519aba"/><path d="M1.6 3.9 L3.9 1.6" stroke="#2b5a70" stroke-width="0.6"/></svg><div style="position:absolute;left:274.6px;top:34.00px;height:10px;line-height:10px;font-size:6.8px;color:#a9a9a9;font-weight:400;font-family:'Liberation Sans', sans-serif;white-space:pre;letter-spacing:-0.082px;">filediffer.py</div><svg style="position:absolute;left:308.7px;top:36.5px;" width="3" height="4.5" viewBox="0 0 3 4.5"><path d="M0.4 0.4 L2.2 2.2 L0.4 4" stroke="#a9a9a9" stroke-width="0.6" fill="none"/></svg><svg style="position:absolute;left:314.2px;top:35.5px;" width="6.2" height="6.2" viewBox="0 0 6.2 6.2"><path d="M3.1 0.4 L5.8 1.8 V4.4 L3.1 5.8 L0.4 4.4 V1.8 Z M0.4 1.8 L3.1 3.2 L5.8 1.8 M3.1 3.2 V5.8" stroke="#b180d7" stroke-width="0.7" fill="none"/></svg><div style="position:absolute;left:323px;top:34.00px;height:10px;line-height:10px;font-size:6.8px;color:#a9a9a9;font-weight:400;font-family:'Liberation Sans', sans-serif;white-space:pre;letter-spacing:-0.487px;">autosave_masking</div><div style="position:absolute;left:153px;top:42px;width:616px;height:298.6px;overflow:hidden;"><div style="position:absolute;left:-153px;top:-42px;width:828px;height:466px;"><div style="position:absolute;left:186.4px;top:49.0px;width:0.6px;height:9.0px;background:#383838;"></div><div style="position:absolute;left:186.4px;top:83.4px;width:0.6px;height:260px;background:#383838;"></div><div style="position:absolute;left:202.3px;top:289.6px;width:0.6px;height:55px;background:#383838;"></div><div style="position:absolute;left:218.2px;top:316.4px;width:0.6px;height:30px;background:#383838;"></div><div style="position:absolute;left:162.463px;top:50.12px;height:9px;line-height:9px;font-size:7.5px;color:#7a828c;font-weight:400;font-family:'Liberation Mono', monospace;white-space:pre;letter-spacing:-0.521px;">167</div><div style="position:absolute;left:186.2px;top:50.12px;height:9px;line-height:9px;font-size:7.5px;color:#cccccc;font-weight:400;font-family:'Liberation Mono', monospace;white-space:pre;letter-spacing:-0.521px;"><span style="color:#cccccc">    </span><span style="color:#c586c0">raise</span><span style="color:#cccccc"> </span><span style="color:#4ec9b0">ValueError</span><span style="color:#ffd700">(</span><span style="color:#ce9178">&quot;Invalid size format&quot;</span><span style="color:#ffd700">)</span></div><div style="position:absolute;left:162.463px;top:59.07px;height:9px;line-height:9px;font-size:7.5px;color:#7a828c;font-weight:400;font-family:'Liberation Mono', monospace;white-space:pre;letter-spacing:-0.521px;">168</div><div style="position:absolute;left:162.463px;top:75.58px;height:9px;line-height:9px;font-size:7.5px;color:#7a828c;font-weight:400;font-family:'Liberation Mono', monospace;white-space:pre;letter-spacing:-0.521px;">169</div><div style="position:absolute;left:186.2px;top:75.58px;height:9px;line-height:9px;font-size:7.5px;color:#cccccc;font-weight:400;font-family:'Liberation Mono', monospace;white-space:pre;letter-spacing:-0.521px;"><span style="color:#569cd6">def</span><span style="color:#cccccc"> </span><span style="color:#dcdcaa">autosave_masking</span><span style="color:#ffd700">(</span><span style="color:#9cdcfe">new_file</span><span style="color:#cccccc">: File, </span><span style="color:#9cdcfe">old_file</span><span style="color:#cccccc">: File, </span><span style="color:#9cdcfe">env</span><span style="color:#cccccc">: Environment, </span><span style="color:#9cdcfe">cache</span><span style="color:#cccccc">: Dict</span><span style="color:#da70d6">[</span><span style="color:#4ec9b0">str</span><span style="color:#cccccc">, File</span><span style="color:#da70d6">]</span><span style="color:#ffd700">)</span><span style="color:#cccccc"> -&gt; Tuple</span><span style="color:#ffd700">[</span><span style="color:#cccccc">File, File</span><span style="color:#ffd700">]</span><span style="color:#cccccc">:</span></div><div style="position:absolute;left:162.463px;top:84.53px;height:9px;line-height:9px;font-size:7.5px;color:#7a828c;font-weight:400;font-family:'Liberation Mono', monospace;white-space:pre;letter-spacing:-0.521px;">170</div><div style="position:absolute;left:186.2px;top:84.53px;height:9px;line-height:9px;font-size:7.5px;color:#cccccc;font-weight:400;font-family:'Liberation Mono', monospace;white-space:pre;letter-spacing:-0.521px;"><span style="color:#cccccc">    </span><span style="color:#ce9178">&quot;&quot;&quot;</span></div><div style="position:absolute;left:162.463px;top:93.47px;height:9px;line-height:9px;font-size:7.5px;color:#7a828c;font-weight:400;font-family:'Liberation Mono', monospace;white-space:pre;letter-spacing:-0.521px;">171</div><div style="position:absolute;left:186.2px;top:93.47px;height:9px;line-height:9px;font-size:7.5px;color:#cccccc;font-weight:400;font-family:'Liberation Mono', monospace;white-space:pre;letter-spacing:-0.521px;"><span style="color:#cccccc">    </span><span style="color:#ce9178">When an autosave file matches specific regex patterns in the settings and the name can be found in the cache,</span></div><div style="position:absolute;left:162.463px;top:102.42px;height:9px;line-height:9px;font-size:7.5px;color:#7a828c;font-weight:400;font-family:'Liberation Mono', monospace;white-space:pre;letter-spacing:-0.521px;">172</div><div style="position:absolute;left:186.2px;top:102.42px;height:9px;line-height:9px;font-size:7.5px;color:#cccccc;font-weight:400;font-family:'Liberation Mono', monospace;white-space:pre;letter-spacing:-0.521px;"><span style="color:#cccccc">    </span><span style="color:#ce9178">it will be passed off as the original file. They are, in fact, the same file,</span></div><div style="position:absolute;left:162.463px;top:111.38px;height:9px;line-height:9px;font-size:7.5px;color:#7a828c;font-weight:400;font-family:'Liberation Mono', monospace;white-space:pre;letter-spacing:-0.521px;">173</div><div style="position:absolute;left:186.2px;top:111.38px;height:9px;line-height:9px;font-size:7.5px;color:#cccccc;font-weight:400;font-family:'Liberation Mono', monospace;white-space:pre;letter-spacing:-0.521px;"><span style="color:#cccccc">    </span><span style="color:#ce9178">but with a unsaved version.</span></div><div style="position:absolute;left:162.463px;top:120.33px;height:9px;line-height:9px;font-size:7.5px;color:#7a828c;font-weight:400;font-family:'Liberation Mono', monospace;white-space:pre;letter-spacing:-0.521px;">174</div><div style="position:absolute;left:162.463px;top:129.28px;height:9px;line-height:9px;font-size:7.5px;color:#7a828c;font-weight:400;font-family:'Liberation Mono', monospace;white-space:pre;letter-spacing:-0.521px;">175</div><div style="position:absolute;left:186.2px;top:129.28px;height:9px;line-height:9px;font-size:7.5px;color:#cccccc;font-weight:400;font-family:'Liberation Mono', monospace;white-space:pre;letter-spacing:-0.521px;"><span style="color:#cccccc">    </span><span style="color:#ce9178">Autosave files are tracked like normal files, but if they match the regex</span></div><div style="position:absolute;left:162.463px;top:138.22px;height:9px;line-height:9px;font-size:7.5px;color:#7a828c;font-weight:400;font-family:'Liberation Mono', monospace;white-space:pre;letter-spacing:-0.521px;">176</div><div style="position:absolute;left:186.2px;top:138.22px;height:9px;line-height:9px;font-size:7.5px;color:#cccccc;font-weight:400;font-family:'Liberation Mono', monospace;white-space:pre;letter-spacing:-0.521px;"><span style="color:#cccccc">    </span><span style="color:#ce9178">AND the name after the regex is filtered matches another file in the cache,</span></div><div style="position:absolute;left:162.463px;top:147.17px;height:9px;line-height:9px;font-size:7.5px;color:#7a828c;font-weight:400;font-family:'Liberation Mono', monospace;white-space:pre;letter-spacing:-0.521px;">177</div><div style="position:absolute;left:186.2px;top:147.17px;height:9px;line-height:9px;font-size:7.5px;color:#cccccc;font-weight:400;font-family:'Liberation Mono', monospace;white-space:pre;letter-spacing:-0.521px;"><span style="color:#cccccc">    </span><span style="color:#ce9178">it will be passed off as the original file. There is a multi-stage</span></div><div style="position:absolute;left:162.463px;top:156.12px;height:9px;line-height:9px;font-size:7.5px;color:#7a828c;font-weight:400;font-family:'Liberation Mono', monospace;white-space:pre;letter-spacing:-0.521px;">178</div><div style="position:absolute;left:186.2px;top:156.12px;height:9px;line-height:9px;font-size:7.5px;color:#cccccc;font-weight:400;font-family:'Liberation Mono', monospace;white-space:pre;letter-spacing:-0.521px;"><span style="color:#cccccc">    </span><span style="color:#ce9178">process to handle this, mostly involving the diffing in process_file_change.</span></div><div style="position:absolute;left:162.463px;top:165.08px;height:9px;line-height:9px;font-size:7.5px;color:#7a828c;font-weight:400;font-family:'Liberation Mono', monospace;white-space:pre;letter-spacing:-0.521px;">179</div><div style="position:absolute;left:186.2px;top:165.08px;height:9px;line-height:9px;font-size:7.5px;color:#cccccc;font-weight:400;font-family:'Liberation Mono', monospace;white-space:pre;letter-spacing:-0.521px;"><span style="color:#cccccc">    </span><span style="color:#ce9178">It compares the new autosave to the old autosave to the original file,</span></div><div style="position:absolute;left:162.463px;top:174.03px;height:9px;line-height:9px;font-size:7.5px;color:#7a828c;font-weight:400;font-family:'Liberation Mono', monospace;white-space:pre;letter-spacing:-0.521px;">180</div><div style="position:absolute;left:186.2px;top:174.03px;height:9px;line-height:9px;font-size:7.5px;color:#cccccc;font-weight:400;font-family:'Liberation Mono', monospace;white-space:pre;letter-spacing:-0.521px;"><span style="color:#cccccc">    </span><span style="color:#ce9178">and there are various conditions that need to be checked. Some autosave files have dates in them, for example</span></div><div style="position:absolute;left:162.463px;top:182.97px;height:9px;line-height:9px;font-size:7.5px;color:#7a828c;font-weight:400;font-family:'Liberation Mono', monospace;white-space:pre;letter-spacing:-0.521px;">181</div><div style="position:absolute;left:162.463px;top:191.92px;height:9px;line-height:9px;font-size:7.5px;color:#7a828c;font-weight:400;font-family:'Liberation Mono', monospace;white-space:pre;letter-spacing:-0.521px;">182</div><div style="position:absolute;left:186.2px;top:191.92px;height:9px;line-height:9px;font-size:7.5px;color:#cccccc;font-weight:400;font-family:'Liberation Mono', monospace;white-space:pre;letter-spacing:-0.521px;"><span style="color:#cccccc">    </span><span style="color:#ce9178">The autosave settings in the config is a dictionary, with each entry</span></div><div style="position:absolute;left:162.463px;top:200.87px;height:9px;line-height:9px;font-size:7.5px;color:#7a828c;font-weight:400;font-family:'Liberation Mono', monospace;white-space:pre;letter-spacing:-0.521px;">183</div><div style="position:absolute;left:186.2px;top:200.87px;height:9px;line-height:9px;font-size:7.5px;color:#cccccc;font-weight:400;font-family:'Liberation Mono', monospace;white-space:pre;letter-spacing:-0.521px;"><span style="color:#cccccc">    </span><span style="color:#ce9178">containing the regex, and the folder where autosaves are. More options will potentially be added later</span></div><div style="position:absolute;left:162.463px;top:209.83px;height:9px;line-height:9px;font-size:7.5px;color:#7a828c;font-weight:400;font-family:'Liberation Mono', monospace;white-space:pre;letter-spacing:-0.521px;">184</div><div style="position:absolute;left:162.463px;top:218.78px;height:9px;line-height:9px;font-size:7.5px;color:#7a828c;font-weight:400;font-family:'Liberation Mono', monospace;white-space:pre;letter-spacing:-0.521px;">185</div><div style="position:absolute;left:186.2px;top:218.78px;height:9px;line-height:9px;font-size:7.5px;color:#cccccc;font-weight:400;font-family:'Liberation Mono', monospace;white-space:pre;letter-spacing:-0.521px;"><span style="color:#cccccc">    </span><span style="color:#ce9178">&quot;&quot;&quot;</span></div><div style="position:absolute;left:162.463px;top:227.72px;height:9px;line-height:9px;font-size:7.5px;color:#7a828c;font-weight:400;font-family:'Liberation Mono', monospace;white-space:pre;letter-spacing:-0.521px;">186</div><div style="position:absolute;left:162.463px;top:236.67px;height:9px;line-height:9px;font-size:7.5px;color:#7a828c;font-weight:400;font-family:'Liberation Mono', monospace;white-space:pre;letter-spacing:-0.521px;">187</div><div style="position:absolute;left:186.2px;top:236.67px;height:9px;line-height:9px;font-size:7.5px;color:#cccccc;font-weight:400;font-family:'Liberation Mono', monospace;white-space:pre;letter-spacing:-0.521px;"><span style="color:#cccccc">    </span><span style="color:#6a9955"># Get the autosave settings from the environment</span></div><div style="position:absolute;left:162.463px;top:245.62px;height:9px;line-height:9px;font-size:7.5px;color:#7a828c;font-weight:400;font-family:'Liberation Mono', monospace;white-space:pre;letter-spacing:-0.521px;">188</div><div style="position:absolute;left:186.2px;top:245.62px;height:9px;line-height:9px;font-size:7.5px;color:#cccccc;font-weight:400;font-family:'Liberation Mono', monospace;white-space:pre;letter-spacing:-0.521px;"><span style="color:#cccccc">    autosave_settings = env.project.files.autosave_masking</span></div><div style="position:absolute;left:162.463px;top:254.57px;height:9px;line-height:9px;font-size:7.5px;color:#7a828c;font-weight:400;font-family:'Liberation Mono', monospace;white-space:pre;letter-spacing:-0.521px;">189</div><div style="position:absolute;left:186.2px;top:254.57px;height:9px;line-height:9px;font-size:7.5px;color:#cccccc;font-weight:400;font-family:'Liberation Mono', monospace;white-space:pre;letter-spacing:-0.521px;"><span style="color:#cccccc">    count = </span><span style="color:#b5cea8">0</span></div><div style="position:absolute;left:162.463px;top:263.52px;height:9px;line-height:9px;font-size:7.5px;color:#7a828c;font-weight:400;font-family:'Liberation Mono', monospace;white-space:pre;letter-spacing:-0.521px;">190</div><div style="position:absolute;left:162.463px;top:272.47px;height:9px;line-height:9px;font-size:7.5px;color:#7a828c;font-weight:400;font-family:'Liberation Mono', monospace;white-space:pre;letter-spacing:-0.521px;">191</div><div style="position:absolute;left:186.2px;top:272.47px;height:9px;line-height:9px;font-size:7.5px;color:#cccccc;font-weight:400;font-family:'Liberation Mono', monospace;white-space:pre;letter-spacing:-0.521px;"><span style="color:#cccccc">    </span><span style="color:#6a9955"># Iterate over the autosave settings</span></div><div style="position:absolute;left:162.463px;top:281.42px;height:9px;line-height:9px;font-size:7.5px;color:#7a828c;font-weight:400;font-family:'Liberation Mono', monospace;white-space:pre;letter-spacing:-0.521px;">192</div><div style="position:absolute;left:186.2px;top:281.42px;height:9px;line-height:9px;font-size:7.5px;color:#cccccc;font-weight:400;font-family:'Liberation Mono', monospace;white-space:pre;letter-spacing:-0.521px;"><span style="color:#cccccc">    </span><span style="color:#c586c0">for</span><span style="color:#cccccc"> extension, settings </span><span style="color:#c586c0">in</span><span style="color:#cccccc"> autosave_settings.items</span><span style="color:#ffd700">()</span><span style="color:#cccccc">:</span></div><div style="position:absolute;left:162.463px;top:290.37px;height:9px;line-height:9px;font-size:7.5px;color:#7a828c;font-weight:400;font-family:'Liberation Mono', monospace;white-space:pre;letter-spacing:-0.521px;">193</div><div style="position:absolute;left:186.2px;top:290.37px;height:9px;line-height:9px;font-size:7.5px;color:#cccccc;font-weight:400;font-family:'Liberation Mono', monospace;white-space:pre;letter-spacing:-0.521px;"><span style="color:#cccccc">        </span><span style="color:#6a9955"># Check if the current file matches the regex pattern</span></div><div style="position:absolute;left:162.463px;top:299.32px;height:9px;line-height:9px;font-size:7.5px;color:#7a828c;font-weight:400;font-family:'Liberation Mono', monospace;white-space:pre;letter-spacing:-0.521px;">194</div><div style="position:absolute;left:186.2px;top:299.32px;height:9px;line-height:9px;font-size:7.5px;color:#cccccc;font-weight:400;font-family:'Liberation Mono', monospace;white-space:pre;letter-spacing:-0.521px;"><span style="color:#cccccc">        match = re.match</span><span style="color:#ffd700">(</span><span style="color:#cccccc">settings</span><span style="color:#da70d6">[</span><span style="color:#ce9178">&quot;regex&quot;</span><span style="color:#da70d6">]</span><span style="color:#cccccc">, new_file.path</span><span style="color:#ffd700">)</span></div><div style="position:absolute;left:162.463px;top:308.27px;height:9px;line-height:9px;font-size:7.5px;color:#7a828c;font-weight:400;font-family:'Liberation Mono', monospace;white-space:pre;letter-spacing:-0.521px;">195</div><div style="position:absolute;left:186.2px;top:308.27px;height:9px;line-height:9px;font-size:7.5px;color:#cccccc;font-weight:400;font-family:'Liberation Mono', monospace;white-space:pre;letter-spacing:-0.521px;"><span style="color:#cccccc">        </span><span style="color:#c586c0">if</span><span style="color:#cccccc"> match:</span></div><div style="position:absolute;left:162.463px;top:317.22px;height:9px;line-height:9px;font-size:7.5px;color:#7a828c;font-weight:400;font-family:'Liberation Mono', monospace;white-space:pre;letter-spacing:-0.521px;">196</div><div style="position:absolute;left:186.2px;top:317.22px;height:9px;line-height:9px;font-size:7.5px;color:#cccccc;font-weight:400;font-family:'Liberation Mono', monospace;white-space:pre;letter-spacing:-0.521px;"><span style="color:#cccccc">            count += </span><span style="color:#b5cea8">1</span></div><div style="position:absolute;left:162.463px;top:326.17px;height:9px;line-height:9px;font-size:7.5px;color:#7a828c;font-weight:400;font-family:'Liberation Mono', monospace;white-space:pre;letter-spacing:-0.521px;">197</div><div style="position:absolute;left:162.463px;top:335.12px;height:9px;line-height:9px;font-size:7.5px;color:#7a828c;font-weight:400;font-family:'Liberation Mono', monospace;white-space:pre;letter-spacing:-0.521px;">198</div><div style="position:absolute;left:186.2px;top:335.12px;height:9px;line-height:9px;font-size:7.5px;color:#cccccc;font-weight:400;font-family:'Liberation Mono', monospace;white-space:pre;letter-spacing:-0.521px;"><span style="color:#cccccc">            </span><span style="color:#c586c0">try</span><span style="color:#cccccc">:</span></div><div style="position:absolute;left:186.6px;top:67.20px;height:8px;line-height:8px;font-size:5.9px;color:#999999;font-weight:400;font-family:'Liberation Sans', sans-serif;white-space:pre;letter-spacing:-0.120px;">Codeium: Refactor | Explain | ×</div></div></div><div style="position:absolute;left:153px;top:43.0px;width:616px;height:5.6px;overflow:hidden;background:#1f1f1f;"><div style="position:absolute;left:-153px;top:-43.0px;width:828px;height:466px;"><div style="position:absolute;left:162.463px;top:41.17px;height:9px;line-height:9px;font-size:7.5px;color:#7a828c;font-weight:400;font-family:'Liberation Mono', monospace;white-space:pre;letter-spacing:-0.521px;">166</div><div style="position:absolute;left:186.2px;top:41.17px;height:9px;line-height:9px;font-size:7.5px;color:#cccccc;font-weight:400;font-family:'Liberation Mono', monospace;white-space:pre;letter-spacing:-0.521px;"><span style="color:#569cd6">def</span><span style="color:#cccccc"> </span><span style="color:#dcdcaa">human_to_bytes</span><span style="color:#ffd700">(</span><span style="color:#9cdcfe">size</span><span style="color:#cccccc">: </span><span style="color:#4ec9b0">str</span><span style="color:#ffd700">)</span><span style="color:#cccccc"> -&gt; </span><span style="color:#4ec9b0">int</span><span style="color:#cccccc">:</span></div></div></div><div style="position:absolute;left:153px;top:48.9px;width:616px;height:1.9px;background:#0e0e0e;opacity:0.85;"></div><div style="position:absolute;left:162.7px;top:344.50px;height:10px;line-height:10px;font-size:4.9px;color:#9d9d9d;font-weight:400;font-family:'Liberation Sans', sans-serif;white-space:pre;letter-spacing:-0.076px;">PROBLEMS</div><div style="position:absolute;left:200.4px;top:344.50px;height:10px;line-height:10px;font-size:4.9px;color:#9d9d9d;font-weight:400;font-family:'Liberation Sans', sans-serif;white-space:pre;letter-spacing:-0.049px;">OUTPUT</div><div style="position:absolute;left:231.9px;top:344.50px;height:10px;line-height:10px;font-size:4.9px;color:#9d9d9d;font-weight:400;font-family:'Liberation Sans', sans-serif;white-space:pre;letter-spacing:-0.146px;">DEBUG CONSOLE</div><div style="position:absolute;left:284.1px;top:344.50px;height:10px;line-height:10px;font-size:4.9px;color:#e7e7e7;font-weight:400;font-family:'Liberation Sans', sans-serif;white-space:pre;letter-spacing:-0.039px;">TERMINAL</div><div style="position:absolute;left:319.7px;top:344.50px;height:10px;line-height:10px;font-size:4.9px;color:#9d9d9d;font-weight:400;font-family:'Liberation Sans', sans-serif;white-space:pre;letter-spacing:-0.098px;">PORTS</div><div style="position:absolute;left:347.7px;top:344.50px;height:10px;line-height:10px;font-size:4.9px;color:#9d9d9d;font-weight:400;font-family:'Liberation Sans', sans-serif;white-space:pre;letter-spacing:-0.186px;">JITX CHECK REPORT</div><div style="position:absolute;left:406.6px;top:344.50px;height:10px;line-height:10px;font-size:4.9px;color:#9d9d9d;font-weight:400;font-family:'Liberation Sans', sans-serif;white-space:pre;letter-spacing:-0.113px;">JITX VISUALIZERS</div><div style="position:absolute;left:459.8px;top:344.50px;height:10px;line-height:10px;font-size:4.9px;color:#9d9d9d;font-weight:400;font-family:'Liberation Sans', sans-serif;white-space:pre;letter-spacing:-0.068px;">JITX COMPONENTS</div><div style="position:absolute;left:516.4px;top:344.50px;height:10px;line-height:10px;font-size:4.9px;color:#9d9d9d;font-weight:400;font-family:'Liberation Sans', sans-serif;white-space:pre;letter-spacing:0.002px;">COMMENTS</div><div style="position:absolute;left:283.5px;top:353.9px;width:26.7px;height:0.8px;background:#0078d4;"></div><svg style="position:absolute;left:721.5px;top:345.3px;" width="7" height="7" viewBox="0 0 7 7"><path d="M3.5 0.3 L6.5 2 V5 L3.5 6.7 L0.5 5 V2 Z" stroke="#cccccc" stroke-width="0.6" fill="none"/><path d="M3.8 1.6 L3 5.4" stroke="#cccccc" stroke-width="0.8"/></svg><div style="position:absolute;left:730.5px;top:343.90px;height:10px;line-height:10px;font-size:5.6px;color:#cccccc;font-weight:400;font-family:'Liberation Sans', sans-serif;white-space:pre;letter-spacing:-0.248px;">bash</div><svg style="position:absolute;left:747.2px;top:345.9px;" width="6" height="6" viewBox="0 0 6 6"><path d="M3 0.3 V5.7 M0.3 3 H5.7" stroke="#cccccc" stroke-width="0.8"/></svg><svg style="position:absolute;left:755.8px;top:347.9px;" width="4" height="2.5" viewBox="0 0 4 2.5"><path d="M0.3 0.3 L2 2 L3.7 0.3" stroke="#cccccc" stroke-width="0.6" fill="none"/></svg><svg style="position:absolute;left:765.2px;top:345.4px;" width="7" height="7" viewBox="0 0 7 7"><rect x="0.4" y="0.4" width="6.2" height="6.2" rx="0.8" stroke="#cccccc" stroke-width="0.7" fill="none"/><path d="M3.5 0.4 V6.6" stroke="#cccccc" stroke-width="0.7"/></svg><svg style="position:absolute;left:777.8px;top:345.2px;" width="6" height="7.5" viewBox="0 0 6 7.5"><path d="M0.2 1.4 H5.8 M2 1.4 V0.4 H4 V1.4 M0.9 1.6 L1.3 7 H4.7 L5.1 1.6 M2.3 2.6 V6 M3.7 2.6 V6" stroke="#cccccc" stroke-width="0.6" fill="none"/></svg><svg style="position:absolute;left:789.8px;top:347.9px;" width="7.2" height="2" viewBox="0 0 7.2 2"><circle cx="1" cy="1" r="0.55" fill="#cccccc"/><circle cx="3.6" cy="1" r="0.55" fill="#cccccc"/><circle cx="6.2" cy="1" r="0.55" fill="#cccccc"/></svg><svg style="position:absolute;left:802.6px;top:347px;" width="5.5" height="3.2" viewBox="0 0 5.5 3.2"><path d="M0.4 2.8 L2.75 0.4 L5.1 2.8" stroke="#cccccc" stroke-width="0.7" fill="none"/></svg><svg style="position:absolute;left:815.4px;top:346.3px;" width="5.2" height="5.2" viewBox="0 0 5.2 5.2"><path d="M0.4 0.4 L4.8 4.8 M4.8 0.4 L0.4 4.8" stroke="#cccccc" stroke-width="0.75"/></svg><svg style="position:absolute;left:156.3px;top:366.7px;" width="4.4" height="4.4" viewBox="0 0 4.4 4.4"><circle cx="2.2" cy="2.2" r="1.7" stroke="#8a8a8a" stroke-width="0.6" fill="none"/></svg><div style="position:absolute;left:162.7px;top:365.70px;height:9px;line-height:9px;font-size:7.0px;font-family:'Liberation Mono', monospace;font-weight:700;white-space:pre;letter-spacing:-0.313px;"><span style="color:#23d18b">asher@InspironAMD5425</span><span style="color:#cccccc">:</span><span style="color:#3b8eea">~/PROJECTS/Software Tools/wakapi-anyide</span><span style="color:#cccccc">$</span></div><div style="position:absolute;left:0px;top:456px;width:16px;height:10px;background:#0078d4;"></div><svg style="position:absolute;left:0px;top:455px;" width="16" height="11" viewBox="0 0 16 11"><path d="M6.4 8.5 L7.9 6 L9.4 3.3 M6.3 5.5 L7.9 6.3 L9.5 6.6" stroke="#dfeaf5" stroke-width="0.75" fill="none" stroke-linecap="round"/></svg><svg style="position:absolute;left:18.6px;top:458px;" width="5.5" height="7" viewBox="0 0 5.5 7"><circle cx="1.2" cy="1.2" r="0.9" stroke="#cccccc" stroke-width="0.55" fill="none"/><circle cx="1.2" cy="5.8" r="0.9" stroke="#cccccc" stroke-width="0.55" fill="none"/><circle cx="4.3" cy="2" r="0.9" stroke="#cccccc" stroke-width="0.55" fill="none"/><path d="M1.2 2.1 V4.9 M4.3 2.9 Q4.3 4.3 1.5 5" stroke="#cccccc" stroke-width="0.55" fill="none"/></svg><div style="position:absolute;left:26.6px;top:456.70px;height:10px;line-height:10px;font-size:6.3px;color:#cccccc;font-weight:400;font-family:'Liberation Sans', sans-serif;white-space:pre;letter-spacing:-0.285px;">testing_autosave-masking*</div><svg style="position:absolute;left:98.6px;top:458.3px;" width="6" height="6" viewBox="0 0 6 6"><path d="M5 1.8 A2.5 2.5 0 0 0 0.6 2.4 M1 4.2 A2.5 2.5 0 0 0 5.4 3.6" stroke="#cccccc" stroke-width="0.65" fill="none"/><path d="M3.8 0.8 L5.2 1.9 L5.1 0.3 M2.2 5.2 L0.8 4.1 L0.9 5.7" stroke="#cccccc" stroke-width="0.55" fill="none"/></svg><svg style="position:absolute;left:111.6px;top:458.3px;" width="6" height="6" viewBox="0 0 6 6"><circle cx="3" cy="3" r="2.5" stroke="#cccccc" stroke-width="0.6" fill="none"/><path d="M1.9 1.9 L4.1 4.1 M4.1 1.9 L1.9 4.1" stroke="#cccccc" stroke-width="0.6"/></svg><div style="position:absolute;left:119.8px;top:456.70px;height:10px;line-height:10px;font-size:5.6px;color:#cccccc;font-weight:400;font-family:'Liberation Sans', sans-serif;white-space:pre;">0</div><svg style="position:absolute;left:124.4px;top:458.2px;" width="6.4" height="6" viewBox="0 0 6.4 6"><path d="M3.2 0.4 L6 5.6 H0.4 Z" stroke="#cccccc" stroke-width="0.6" fill="none" stroke-linejoin="round"/><path d="M3.2 2.2 V3.9 M3.2 4.5 V5" stroke="#cccccc" stroke-width="0.55"/></svg><div style="position:absolute;left:132.4px;top:456.70px;height:10px;line-height:10px;font-size:5.6px;color:#cccccc;font-weight:400;font-family:'Liberation Sans', sans-serif;white-space:pre;">0</div><svg style="position:absolute;left:143.2px;top:458.2px;" width="7" height="6.5" viewBox="0 0 7 6.5"><circle cx="3.5" cy="2.6" r="0.8" fill="#cccccc"/><path d="M3.5 3.2 V6.3 M1.6 0.8 Q0.4 2.6 1.6 4.4 M5.4 0.8 Q6.6 2.6 5.4 4.4" stroke="#cccccc" stroke-width="0.6" fill="none"/></svg><div style="position:absolute;left:151.7px;top:456.70px;height:10px;line-height:10px;font-size:5.6px;color:#cccccc;font-weight:400;font-family:'Liberation Sans', sans-serif;white-space:pre;">0</div><svg style="position:absolute;left:161.2px;top:458.3px;" width="6.5" height="6" viewBox="0 0 6.5 6"><path d="M1 1.3 A2.6 2.6 0 1 1 0.6 3.6" stroke="#cccccc" stroke-width="0.6" fill="none"/><path d="M0.4 0.6 V2 H1.8 M3.4 1.6 V3.1 L4.4 4" stroke="#cccccc" stroke-width="0.6" fill="none"/></svg><div style="position:absolute;left:169.7px;top:456.70px;height:10px;line-height:10px;font-size:6.0px;color:#cccccc;font-weight:400;font-family:'Liberation Sans', sans-serif;white-space:pre;letter-spacing:-0.268px;">2 hrs 32 mins</div><div style="position:absolute;left:209.9px;top:456.70px;height:10px;line-height:10px;font-size:6.3px;color:#cccccc;font-weight:400;font-family:'Liberation Sans', sans-serif;white-space:pre;letter-spacing:-0.293px;">rust-analyzer</div><div style="position:absolute;left:250.4px;top:456.70px;height:10px;line-height:10px;font-size:6.3px;color:#cccccc;font-weight:400;font-family:'Liberation Sans', sans-serif;white-space:pre;letter-spacing:-0.397px;">JITX: Free Tier - Upgrade</div><div style="position:absolute;left:598px;top:456.70px;height:10px;line-height:10px;font-size:6.3px;color:#cccccc;font-weight:400;font-family:'Liberation Sans', sans-serif;white-space:pre;letter-spacing:-0.422px;">Ln 210, Col 59</div><div style="position:absolute;left:640.7px;top:456.70px;height:10px;line-height:10px;font-size:6.3px;color:#cccccc;font-weight:400;font-family:'Liberation Sans', sans-serif;white-space:pre;letter-spacing:-0.565px;">Spaces: 4</div><div style="position:absolute;left:671.9px;top:456.70px;height:10px;line-height:10px;font-size:6.3px;color:#cccccc;font-weight:400;font-family:'Liberation Sans', sans-serif;white-space:pre;letter-spacing:-0.737px;">UTF-8</div><div style="position:absolute;left:694px;top:456.70px;height:10px;line-height:10px;font-size:6.3px;color:#cccccc;font-weight:400;font-family:'Liberation Sans', sans-serif;white-space:pre;letter-spacing:-1.952px;">LF</div><div style="position:absolute;left:708px;top:456.70px;height:10px;line-height:10px;font-size:6.3px;color:#cccccc;font-weight:400;font-family:'Liberation Sans', sans-serif;white-space:pre;letter-spacing:-0.303px;">Python</div><div style="position:absolute;left:733.4px;top:456.70px;height:10px;line-height:10px;font-size:6.3px;color:#cccccc;font-weight:400;font-family:'Liberation Sans', sans-serif;white-space:pre;letter-spacing:-0.269px;">3.12.3 64-bit</div><div style="position:absolute;left:773px;top:456.70px;height:10px;line-height:10px;font-size:6.3px;color:#cccccc;font-weight:400;font-family:'Liberation Sans', sans-serif;white-space:pre;letter-spacing:-0.267px;">Codeium: {...}</div><svg style="position:absolute;left:815.8px;top:458.2px;" width="6.5" height="6.5" viewBox="0 0 6.5 6.5"><path d="M1 4.8 V2.8 A2.2 2.2 0 0 1 5.2 2.6 V4.8 L5.8 5.4 H0.4 Z" stroke="#cccccc" stroke-width="0.6" fill="none"/><circle cx="5" cy="1.4" r="1.2" fill="#cccccc"/></svg><div style="position:absolute;left:769.2px;top:42px;width:2.2px;height:299px;background:#161616;"></div><div style="position:absolute;left:772.0px;top:43.35px;width:2.75px;height:0.9px;background:#cccccc;opacity:0.26;"></div><div style="position:absolute;left:775.27px;top:43.35px;width:1.73px;height:0.9px;background:#cccccc;opacity:0.26;"></div><div style="position:absolute;left:774.0px;top:44.55px;width:3.77px;height:0.9px;background:#cccccc;opacity:0.26;"></div><div style="position:absolute;left:778.39px;top:44.55px;width:0.61px;height:0.9px;background:#cccccc;opacity:0.26;"></div><div style="position:absolute;left:774.0px;top:45.75px;width:1.38px;height:0.9px;background:#cccccc;opacity:0.26;"></div><div style="position:absolute;left:776.03px;top:45.75px;width:1.54px;height:0.9px;background:#cccccc;opacity:0.26;"></div><div style="position:absolute;left:778.05px;top:45.75px;width:1.95px;height:0.9px;background:#cccccc;opacity:0.26;"></div><div style="position:absolute;left:774.0px;top:46.75px;width:1.79px;height:0.9px;background:#cccccc;opacity:0.26;"></div><div style="position:absolute;left:776.34px;top:46.75px;width:1.66px;height:0.9px;background:#cccccc;opacity:0.26;"></div><div style="position:absolute;left:774.0px;top:47.85px;width:3.97px;height:0.9px;background:#6a9955;opacity:0.4;"></div><div style="position:absolute;left:778.6px;top:47.85px;width:0.4px;height:0.9px;background:#6a9955;opacity:0.4;"></div><div style="position:absolute;left:774.0px;top:49.05px;width:5.32px;height:0.9px;background:#cccccc;opacity:0.26;"></div><div style="position:absolute;left:779.9px;top:49.05px;width:1.89px;height:0.9px;background:#cccccc;opacity:0.26;"></div><div style="position:absolute;left:774.0px;top:49.95px;width:2.68px;height:0.9px;background:#569cd6;opacity:0.34;"></div><div style="position:absolute;left:777.5px;top:49.95px;width:2.07px;height:0.9px;background:#569cd6;opacity:0.34;"></div><div style="position:absolute;left:780.28px;top:49.95px;width:0.72px;height:0.9px;background:#569cd6;opacity:0.34;"></div><div style="position:absolute;left:781.0px;top:49.95px;width:3.83px;height:0.9px;background:#6a9955;opacity:0.4;"></div><div style="position:absolute;left:785.31px;top:49.95px;width:1.49px;height:0.9px;background:#6a9955;opacity:0.4;"></div><div style="position:absolute;left:787.34px;top:49.95px;width:4.47px;height:0.9px;background:#6a9955;opacity:0.4;"></div><div style="position:absolute;left:792.44px;top:49.95px;width:2.71px;height:0.9px;background:#6a9955;opacity:0.4;"></div><div style="position:absolute;left:795.87px;top:49.95px;width:3.38px;height:0.9px;background:#6a9955;opacity:0.4;"></div><div style="position:absolute;left:799.83px;top:49.95px;width:5.01px;height:0.9px;background:#6a9955;opacity:0.4;"></div><div style="position:absolute;left:805.6px;top:49.95px;width:2.37px;height:0.9px;background:#6a9955;opacity:0.4;"></div><div style="position:absolute;left:808.68px;top:49.95px;width:3.72px;height:0.9px;background:#6a9955;opacity:0.4;"></div><div style="position:absolute;left:813.25px;top:49.95px;width:4.7px;height:0.9px;background:#6a9955;opacity:0.4;"></div><div style="position:absolute;left:774.0px;top:52.25px;width:3.0px;height:0.9px;background:#6a9955;opacity:0.4;"></div><div style="position:absolute;left:777.0px;top:52.25px;width:3.21px;height:0.9px;background:#cccccc;opacity:0.26;"></div><div style="position:absolute;left:781.0px;top:52.25px;width:1.93px;height:0.9px;background:#cccccc;opacity:0.26;"></div><div style="position:absolute;left:776.0px;top:53.45px;width:1.39px;height:0.9px;background:#cccccc;opacity:0.26;"></div><div style="position:absolute;left:778.14px;top:53.45px;width:4.87px;height:0.9px;background:#cccccc;opacity:0.26;"></div><div style="position:absolute;left:783.72px;top:53.45px;width:5.4px;height:0.9px;background:#cccccc;opacity:0.26;"></div><div style="position:absolute;left:774.0px;top:56.05px;width:4.0px;height:0.9px;background:#cccccc;opacity:0.26;"></div><div style="position:absolute;left:778.0px;top:56.05px;width:3.0px;height:0.9px;background:#6a9955;opacity:0.4;"></div><div style="position:absolute;left:781.0px;top:56.05px;width:5.23px;height:0.9px;background:#cccccc;opacity:0.26;"></div><div style="position:absolute;left:787.11px;top:56.05px;width:3.48px;height:0.9px;background:#cccccc;opacity:0.26;"></div><div style="position:absolute;left:791.33px;top:56.05px;width:1.49px;height:0.9px;background:#cccccc;opacity:0.26;"></div><div style="position:absolute;left:793.59px;top:56.05px;width:4.31px;height:0.9px;background:#cccccc;opacity:0.26;"></div><div style="position:absolute;left:798.79px;top:56.05px;width:1.21px;height:0.9px;background:#cccccc;opacity:0.26;"></div><div style="position:absolute;left:776.0px;top:58.45px;width:3.05px;height:0.9px;background:#ce9178;opacity:0.34;"></div><div style="position:absolute;left:779.8px;top:58.45px;width:1.31px;height:0.9px;background:#ce9178;opacity:0.34;"></div><div style="position:absolute;left:781.77px;top:58.45px;width:2.01px;height:0.9px;background:#ce9178;opacity:0.34;"></div><div style="position:absolute;left:784.28px;top:58.45px;width:1.48px;height:0.9px;background:#ce9178;opacity:0.34;"></div><div style="position:absolute;left:786.56px;top:58.45px;width:1.82px;height:0.9px;background:#ce9178;opacity:0.34;"></div><div style="position:absolute;left:788.94px;top:58.45px;width:3.08px;height:0.9px;background:#ce9178;opacity:0.34;"></div><div style="position:absolute;left:792.86px;top:58.45px;width:1.59px;height:0.9px;background:#ce9178;opacity:0.34;"></div><div style="position:absolute;left:795.1px;top:58.45px;width:3.84px;height:0.9px;background:#ce9178;opacity:0.34;"></div><div style="position:absolute;left:799.78px;top:58.45px;width:5.13px;height:0.9px;background:#ce9178;opacity:0.34;"></div><div style="position:absolute;left:805.75px;top:58.45px;width:2.54px;height:0.9px;background:#ce9178;opacity:0.34;"></div><div style="position:absolute;left:808.93px;top:58.45px;width:2.92px;height:0.9px;background:#ce9178;opacity:0.34;"></div><div style="position:absolute;left:812.7px;top:58.45px;width:4.3px;height:0.9px;background:#ce9178;opacity:0.34;"></div><div style="position:absolute;left:776.0px;top:61.85px;width:2.05px;height:0.9px;background:#cccccc;opacity:0.26;"></div><div style="position:absolute;left:778.6px;top:61.85px;width:2.32px;height:0.9px;background:#cccccc;opacity:0.26;"></div><div style="position:absolute;left:781.59px;top:61.85px;width:4.03px;height:0.9px;background:#cccccc;opacity:0.26;"></div><div style="position:absolute;left:786.18px;top:61.85px;width:1.22px;height:0.9px;background:#cccccc;opacity:0.26;"></div><div style="position:absolute;left:788.04px;top:61.85px;width:2.96px;height:0.9px;background:#cccccc;opacity:0.26;"></div><div style="position:absolute;left:777.0px;top:63.05px;width:5.0px;height:0.9px;background:#cccccc;opacity:0.26;"></div><div style="position:absolute;left:778.0px;top:64.45px;width:3.0px;height:0.9px;background:#cccccc;opacity:0.26;"></div><div style="position:absolute;left:774.0px;top:66.75px;width:4.45px;height:0.9px;background:#cccccc;opacity:0.26;"></div><div style="position:absolute;left:778.92px;top:66.75px;width:5.52px;height:0.9px;background:#cccccc;opacity:0.26;"></div><div style="position:absolute;left:785.24px;top:66.75px;width:0.76px;height:0.9px;background:#cccccc;opacity:0.26;"></div><div style="position:absolute;left:776.0px;top:68.55px;width:3.08px;height:0.9px;background:#ce9178;opacity:0.34;"></div><div style="position:absolute;left:779.71px;top:68.55px;width:1.7px;height:0.9px;background:#ce9178;opacity:0.34;"></div><div style="position:absolute;left:782.15px;top:68.55px;width:1.5px;height:0.9px;background:#ce9178;opacity:0.34;"></div><div style="position:absolute;left:784.12px;top:68.55px;width:2.2px;height:0.9px;background:#ce9178;opacity:0.34;"></div><div style="position:absolute;left:786.85px;top:68.55px;width:2.83px;height:0.9px;background:#ce9178;opacity:0.34;"></div><div style="position:absolute;left:790.16px;top:68.55px;width:1.2px;height:0.9px;background:#ce9178;opacity:0.34;"></div><div style="position:absolute;left:791.87px;top:68.55px;width:1.69px;height:0.9px;background:#ce9178;opacity:0.34;"></div><div style="position:absolute;left:794.18px;top:68.55px;width:1.32px;height:0.9px;background:#ce9178;opacity:0.34;"></div><div style="position:absolute;left:796.34px;top:68.55px;width:4.15px;height:0.9px;background:#ce9178;opacity:0.34;"></div><div style="position:absolute;left:801.01px;top:68.55px;width:2.41px;height:0.9px;background:#ce9178;opacity:0.34;"></div><div style="position:absolute;left:804.02px;top:68.55px;width:2.95px;height:0.9px;background:#ce9178;opacity:0.34;"></div><div style="position:absolute;left:807.48px;top:68.55px;width:3.52px;height:0.9px;background:#ce9178;opacity:0.34;"></div><div style="position:absolute;left:776.0px;top:70.85px;width:3.44px;height:0.9px;background:#cccccc;opacity:0.26;"></div><div style="position:absolute;left:780.0px;top:70.85px;width:1.61px;height:0.9px;background:#6a9955;opacity:0.4;"></div><div style="position:absolute;left:782.11px;top:70.85px;width:2.84px;height:0.9px;background:#6a9955;opacity:0.4;"></div><div style="position:absolute;left:785.52px;top:70.85px;width:5.18px;height:0.9px;background:#6a9955;opacity:0.4;"></div><div style="position:absolute;left:791.22px;top:70.85px;width:1.31px;height:0.9px;background:#6a9955;opacity:0.4;"></div><div style="position:absolute;left:793.41px;top:70.85px;width:3.74px;height:0.9px;background:#6a9955;opacity:0.4;"></div><div style="position:absolute;left:797.66px;top:70.85px;width:3.81px;height:0.9px;background:#6a9955;opacity:0.4;"></div><div style="position:absolute;left:801.93px;top:70.85px;width:3.73px;height:0.9px;background:#6a9955;opacity:0.4;"></div><div style="position:absolute;left:806.56px;top:70.85px;width:1.44px;height:0.9px;background:#6a9955;opacity:0.4;"></div><div style="position:absolute;left:776.0px;top:72.35px;width:2.45px;height:0.9px;background:#cccccc;opacity:0.26;"></div><div style="position:absolute;left:779.07px;top:72.35px;width:2.0px;height:0.9px;background:#cccccc;opacity:0.26;"></div><div style="position:absolute;left:781.87px;top:72.35px;width:3.76px;height:0.9px;background:#cccccc;opacity:0.26;"></div><div style="position:absolute;left:786.42px;top:72.35px;width:2.78px;height:0.9px;background:#cccccc;opacity:0.26;"></div><div style="position:absolute;left:789.76px;top:72.35px;width:4.24px;height:0.9px;background:#cccccc;opacity:0.26;"></div><div style="position:absolute;left:776.0px;top:73.55px;width:5.0px;height:0.9px;background:#cccccc;opacity:0.26;"></div><div style="position:absolute;left:774.0px;top:75.05px;width:5.13px;height:0.9px;background:#569cd6;opacity:0.34;"></div><div style="position:absolute;left:779.91px;top:75.05px;width:2.29px;height:0.9px;background:#569cd6;opacity:0.34;"></div><div style="position:absolute;left:782.88px;top:75.05px;width:2.91px;height:0.9px;background:#569cd6;opacity:0.34;"></div><div style="position:absolute;left:786.25px;top:75.05px;width:1.33px;height:0.9px;background:#569cd6;opacity:0.34;"></div><div style="position:absolute;left:788.16px;top:75.05px;width:0.84px;height:0.9px;background:#569cd6;opacity:0.34;"></div><div style="position:absolute;left:776.0px;top:78.85px;width:5.79px;height:0.9px;background:#ce9178;opacity:0.34;"></div><div style="position:absolute;left:782.44px;top:78.85px;width:5.7px;height:0.9px;background:#ce9178;opacity:0.34;"></div><div style="position:absolute;left:789.03px;top:78.85px;width:5.78px;height:0.9px;background:#ce9178;opacity:0.34;"></div><div style="position:absolute;left:795.43px;top:78.85px;width:2.26px;height:0.9px;background:#ce9178;opacity:0.34;"></div><div style="position:absolute;left:798.24px;top:78.85px;width:2.14px;height:0.9px;background:#ce9178;opacity:0.34;"></div><div style="position:absolute;left:776.0px;top:81.15px;width:4.2px;height:0.9px;background:#ce9178;opacity:0.34;"></div><div style="position:absolute;left:781.05px;top:81.15px;width:5.23px;height:0.9px;background:#ce9178;opacity:0.34;"></div><div style="position:absolute;left:786.95px;top:81.15px;width:4.33px;height:0.9px;background:#ce9178;opacity:0.34;"></div><div style="position:absolute;left:792.09px;top:81.15px;width:1.61px;height:0.9px;background:#ce9178;opacity:0.34;"></div><div style="position:absolute;left:794.45px;top:81.15px;width:5.57px;height:0.9px;background:#ce9178;opacity:0.34;"></div><div style="position:absolute;left:800.82px;top:81.15px;width:4.8px;height:0.9px;background:#ce9178;opacity:0.34;"></div><div style="position:absolute;left:806.28px;top:81.15px;width:0.72px;height:0.9px;background:#ce9178;opacity:0.34;"></div><div style="position:absolute;left:776.0px;top:83.05px;width:2.8px;height:0.9px;background:#cccccc;opacity:0.26;"></div><div style="position:absolute;left:777.0px;top:84.05px;width:5.86px;height:0.9px;background:#ce9178;opacity:0.34;"></div><div style="position:absolute;left:783.49px;top:84.05px;width:3.13px;height:0.9px;background:#ce9178;opacity:0.34;"></div><div style="position:absolute;left:787.49px;top:84.05px;width:4.68px;height:0.9px;background:#ce9178;opacity:0.34;"></div><div style="position:absolute;left:792.7px;top:84.05px;width:1.81px;height:0.9px;background:#ce9178;opacity:0.34;"></div><div style="position:absolute;left:795.03px;top:84.05px;width:5.54px;height:0.9px;background:#ce9178;opacity:0.34;"></div><div style="position:absolute;left:801.38px;top:84.05px;width:1.62px;height:0.9px;background:#ce9178;opacity:0.34;"></div><div style="position:absolute;left:776.0px;top:85.85px;width:5.91px;height:0.9px;background:#6a9955;opacity:0.4;"></div><div style="position:absolute;left:782.65px;top:85.85px;width:2.88px;height:0.9px;background:#6a9955;opacity:0.4;"></div><div style="position:absolute;left:786.23px;top:85.85px;width:1.83px;height:0.9px;background:#6a9955;opacity:0.4;"></div><div style="position:absolute;left:788.52px;top:85.85px;width:5.86px;height:0.9px;background:#6a9955;opacity:0.4;"></div><div style="position:absolute;left:795.12px;top:85.85px;width:3.73px;height:0.9px;background:#6a9955;opacity:0.4;"></div><div style="position:absolute;left:799.72px;top:85.85px;width:3.28px;height:0.9px;background:#6a9955;opacity:0.4;"></div><div style="position:absolute;left:803.84px;top:85.85px;width:5.17px;height:0.9px;background:#6a9955;opacity:0.4;"></div><div style="position:absolute;left:809.55px;top:85.85px;width:1.45px;height:0.9px;background:#6a9955;opacity:0.4;"></div><div style="position:absolute;left:785.0px;top:86.95px;width:2.35px;height:0.9px;background:#6a9955;opacity:0.4;"></div><div style="position:absolute;left:788.07px;top:86.95px;width:2.44px;height:0.9px;background:#6a9955;opacity:0.4;"></div><div style="position:absolute;left:791.15px;top:86.95px;width:1.83px;height:0.9px;background:#6a9955;opacity:0.4;"></div><div style="position:absolute;left:793.84px;top:86.95px;width:2.9px;height:0.9px;background:#6a9955;opacity:0.4;"></div><div style="position:absolute;left:797.39px;top:86.95px;width:4.0px;height:0.9px;background:#6a9955;opacity:0.4;"></div><div style="position:absolute;left:802.25px;top:86.95px;width:3.22px;height:0.9px;background:#6a9955;opacity:0.4;"></div><div style="position:absolute;left:806.33px;top:86.95px;width:0.67px;height:0.9px;background:#6a9955;opacity:0.4;"></div><div style="position:absolute;left:776.0px;top:88.05px;width:3.71px;height:0.9px;background:#cccccc;opacity:0.26;"></div><div style="position:absolute;left:780.17px;top:88.05px;width:3.31px;height:0.9px;background:#cccccc;opacity:0.26;"></div><div style="position:absolute;left:784.02px;top:88.05px;width:1.22px;height:0.9px;background:#cccccc;opacity:0.26;"></div><div style="position:absolute;left:786.04px;top:88.05px;width:2.03px;height:0.9px;background:#cccccc;opacity:0.26;"></div><div style="position:absolute;left:788.74px;top:88.05px;width:2.26px;height:0.9px;background:#cccccc;opacity:0.26;"></div><div style="position:absolute;left:776.0px;top:90.15px;width:2.76px;height:0.9px;background:#cccccc;opacity:0.26;"></div><div style="position:absolute;left:779.45px;top:90.15px;width:3.87px;height:0.9px;background:#cccccc;opacity:0.26;"></div><div style="position:absolute;left:784.12px;top:90.15px;width:1.71px;height:0.9px;background:#cccccc;opacity:0.26;"></div><div style="position:absolute;left:786.53px;top:90.15px;width:0.47px;height:0.9px;background:#cccccc;opacity:0.26;"></div><div style="position:absolute;left:774.0px;top:92.95px;width:4.91px;height:0.9px;background:#6a9955;opacity:0.4;"></div><div style="position:absolute;left:779.59px;top:92.95px;width:3.9px;height:0.9px;background:#6a9955;opacity:0.4;"></div><div style="position:absolute;left:784.27px;top:92.95px;width:3.73px;height:0.9px;background:#6a9955;opacity:0.4;"></div><div style="position:absolute;left:776.0px;top:95.15px;width:4.14px;height:0.9px;background:#ce9178;opacity:0.34;"></div><div style="position:absolute;left:780.82px;top:95.15px;width:3.66px;height:0.9px;background:#ce9178;opacity:0.34;"></div><div style="position:absolute;left:785.24px;top:95.15px;width:3.37px;height:0.9px;background:#ce9178;opacity:0.34;"></div><div style="position:absolute;left:789.3px;top:95.15px;width:3.49px;height:0.9px;background:#ce9178;opacity:0.34;"></div><div style="position:absolute;left:793.67px;top:95.15px;width:4.56px;height:0.9px;background:#ce9178;opacity:0.34;"></div><div style="position:absolute;left:799.07px;top:95.15px;width:5.72px;height:0.9px;background:#ce9178;opacity:0.34;"></div><div style="position:absolute;left:805.36px;top:95.15px;width:3.89px;height:0.9px;background:#ce9178;opacity:0.34;"></div><div style="position:absolute;left:810.12px;top:95.15px;width:2.88px;height:0.9px;background:#ce9178;opacity:0.34;"></div><div style="position:absolute;left:776.0px;top:96.85px;width:1.78px;height:0.9px;background:#ce9178;opacity:0.34;"></div><div style="position:absolute;left:778.43px;top:96.85px;width:1.55px;height:0.9px;background:#ce9178;opacity:0.34;"></div><div style="position:absolute;left:780.54px;top:96.85px;width:1.55px;height:0.9px;background:#ce9178;opacity:0.34;"></div><div style="position:absolute;left:782.84px;top:96.85px;width:4.96px;height:0.9px;background:#ce9178;opacity:0.34;"></div><div style="position:absolute;left:788.66px;top:96.85px;width:1.94px;height:0.9px;background:#ce9178;opacity:0.34;"></div><div style="position:absolute;left:791.37px;top:96.85px;width:4.37px;height:0.9px;background:#ce9178;opacity:0.34;"></div><div style="position:absolute;left:796.26px;top:96.85px;width:5.44px;height:0.9px;background:#ce9178;opacity:0.34;"></div><div style="position:absolute;left:802.58px;top:96.85px;width:2.25px;height:0.9px;background:#ce9178;opacity:0.34;"></div><div style="position:absolute;left:805.71px;top:96.85px;width:3.11px;height:0.9px;background:#ce9178;opacity:0.34;"></div><div style="position:absolute;left:809.49px;top:96.85px;width:0.51px;height:0.9px;background:#ce9178;opacity:0.34;"></div><div style="position:absolute;left:776.0px;top:98.05px;width:1.98px;height:0.9px;background:#ce9178;opacity:0.34;"></div><div style="position:absolute;left:778.62px;top:98.05px;width:3.67px;height:0.9px;background:#ce9178;opacity:0.34;"></div><div style="position:absolute;left:782.9px;top:98.05px;width:2.14px;height:0.9px;background:#ce9178;opacity:0.34;"></div><div style="position:absolute;left:785.63px;top:98.05px;width:4.67px;height:0.9px;background:#ce9178;opacity:0.34;"></div><div style="position:absolute;left:790.75px;top:98.05px;width:3.86px;height:0.9px;background:#ce9178;opacity:0.34;"></div><div style="position:absolute;left:795.26px;top:98.05px;width:1.29px;height:0.9px;background:#ce9178;opacity:0.34;"></div><div style="position:absolute;left:797.15px;top:98.05px;width:4.19px;height:0.9px;background:#ce9178;opacity:0.34;"></div><div style="position:absolute;left:802.02px;top:98.05px;width:1.51px;height:0.9px;background:#ce9178;opacity:0.34;"></div><div style="position:absolute;left:804.43px;top:98.05px;width:4.98px;height:0.9px;background:#ce9178;opacity:0.34;"></div><div style="position:absolute;left:810.3px;top:98.05px;width:1.7px;height:0.9px;background:#ce9178;opacity:0.34;"></div><div style="position:absolute;left:812.57px;top:98.05px;width:1.39px;height:0.9px;background:#ce9178;opacity:0.34;"></div><div style="position:absolute;left:776.0px;top:100.05px;width:2.5px;height:0.9px;background:#ce9178;opacity:0.34;"></div><div style="position:absolute;left:779.01px;top:100.05px;width:3.23px;height:0.9px;background:#ce9178;opacity:0.34;"></div><div style="position:absolute;left:783.09px;top:100.05px;width:5.13px;height:0.9px;background:#ce9178;opacity:0.34;"></div><div style="position:absolute;left:788.79px;top:100.05px;width:1.92px;height:0.9px;background:#ce9178;opacity:0.34;"></div><div style="position:absolute;left:791.57px;top:100.05px;width:0.43px;height:0.9px;background:#ce9178;opacity:0.34;"></div><div style="position:absolute;left:776.0px;top:101.05px;width:1.63px;height:0.9px;background:#ce9178;opacity:0.34;"></div><div style="position:absolute;left:778.11px;top:101.05px;width:4.5px;height:0.9px;background:#ce9178;opacity:0.34;"></div><div style="position:absolute;left:783.25px;top:101.05px;width:1.55px;height:0.9px;background:#ce9178;opacity:0.34;"></div><div style="position:absolute;left:785.67px;top:101.05px;width:4.25px;height:0.9px;background:#ce9178;opacity:0.34;"></div><div style="position:absolute;left:790.73px;top:101.05px;width:1.6px;height:0.9px;background:#ce9178;opacity:0.34;"></div><div style="position:absolute;left:793.16px;top:101.05px;width:1.52px;height:0.9px;background:#ce9178;opacity:0.34;"></div><div style="position:absolute;left:795.52px;top:101.05px;width:3.38px;height:0.9px;background:#ce9178;opacity:0.34;"></div><div style="position:absolute;left:799.5px;top:101.05px;width:0.5px;height:0.9px;background:#ce9178;opacity:0.34;"></div><div style="position:absolute;left:776.0px;top:103.95px;width:2.49px;height:0.9px;background:#ce9178;opacity:0.34;"></div><div style="position:absolute;left:777.0px;top:105.35px;width:3.73px;height:0.9px;background:#ce9178;opacity:0.34;"></div><div style="position:absolute;left:781.29px;top:105.35px;width:1.73px;height:0.9px;background:#ce9178;opacity:0.34;"></div><div style="position:absolute;left:783.53px;top:105.35px;width:1.44px;height:0.9px;background:#ce9178;opacity:0.34;"></div><div style="position:absolute;left:785.52px;top:105.35px;width:2.7px;height:0.9px;background:#ce9178;opacity:0.34;"></div><div style="position:absolute;left:788.8px;top:105.35px;width:4.85px;height:0.9px;background:#ce9178;opacity:0.34;"></div><div style="position:absolute;left:794.23px;top:105.35px;width:3.6px;height:0.9px;background:#ce9178;opacity:0.34;"></div><div style="position:absolute;left:798.36px;top:105.35px;width:2.87px;height:0.9px;background:#ce9178;opacity:0.34;"></div><div style="position:absolute;left:801.68px;top:105.35px;width:2.4px;height:0.9px;background:#ce9178;opacity:0.34;"></div><div style="position:absolute;left:804.54px;top:105.35px;width:4.72px;height:0.9px;background:#ce9178;opacity:0.34;"></div><div style="position:absolute;left:809.96px;top:105.35px;width:2.11px;height:0.9px;background:#ce9178;opacity:0.34;"></div><div style="position:absolute;left:777.0px;top:106.75px;width:5.69px;height:0.9px;background:#ce9178;opacity:0.34;"></div><div style="position:absolute;left:783.18px;top:106.75px;width:5.13px;height:0.9px;background:#ce9178;opacity:0.34;"></div><div style="position:absolute;left:788.96px;top:106.75px;width:3.58px;height:0.9px;background:#ce9178;opacity:0.34;"></div><div style="position:absolute;left:793.36px;top:106.75px;width:3.09px;height:0.9px;background:#ce9178;opacity:0.34;"></div><div style="position:absolute;left:797.13px;top:106.75px;width:4.5px;height:0.9px;background:#ce9178;opacity:0.34;"></div><div style="position:absolute;left:776.0px;top:109.45px;width:2.84px;height:0.9px;background:#ce9178;opacity:0.34;"></div><div style="position:absolute;left:779.67px;top:109.45px;width:4.59px;height:0.9px;background:#ce9178;opacity:0.34;"></div><div style="position:absolute;left:785.0px;top:109.45px;width:3.14px;height:0.9px;background:#ce9178;opacity:0.34;"></div><div style="position:absolute;left:788.75px;top:109.45px;width:1.46px;height:0.9px;background:#ce9178;opacity:0.34;"></div><div style="position:absolute;left:790.72px;top:109.45px;width:1.54px;height:0.9px;background:#ce9178;opacity:0.34;"></div><div style="position:absolute;left:793.04px;top:109.45px;width:2.43px;height:0.9px;background:#ce9178;opacity:0.34;"></div><div style="position:absolute;left:776.0px;top:112.15px;width:1.61px;height:0.9px;background:#ce9178;opacity:0.34;"></div><div style="position:absolute;left:778.43px;top:112.15px;width:5.38px;height:0.9px;background:#ce9178;opacity:0.34;"></div><div style="position:absolute;left:784.56px;top:112.15px;width:2.55px;height:0.9px;background:#ce9178;opacity:0.34;"></div><div style="position:absolute;left:787.68px;top:112.15px;width:2.61px;height:0.9px;background:#ce9178;opacity:0.34;"></div><div style="position:absolute;left:790.94px;top:112.15px;width:1.96px;height:0.9px;background:#ce9178;opacity:0.34;"></div><div style="position:absolute;left:793.55px;top:112.15px;width:2.46px;height:0.9px;background:#ce9178;opacity:0.34;"></div><div style="position:absolute;left:796.89px;top:112.15px;width:5.87px;height:0.9px;background:#ce9178;opacity:0.34;"></div><div style="position:absolute;left:803.46px;top:112.15px;width:2.37px;height:0.9px;background:#ce9178;opacity:0.34;"></div><div style="position:absolute;left:806.72px;top:112.15px;width:1.28px;height:0.9px;background:#ce9178;opacity:0.34;"></div><div style="position:absolute;left:776.0px;top:114.15px;width:1.21px;height:0.9px;background:#cccccc;opacity:0.26;"></div><div style="position:absolute;left:777.83px;top:114.15px;width:3.48px;height:0.9px;background:#cccccc;opacity:0.26;"></div><div style="position:absolute;left:781.98px;top:114.15px;width:2.16px;height:0.9px;background:#cccccc;opacity:0.26;"></div><div style="position:absolute;left:784.82px;top:114.15px;width:1.22px;height:0.9px;background:#cccccc;opacity:0.26;"></div><div style="position:absolute;left:786.62px;top:114.15px;width:0.38px;height:0.9px;background:#cccccc;opacity:0.26;"></div><div style="position:absolute;left:776.0px;top:115.95px;width:1.4px;height:0.9px;background:#6a9955;opacity:0.4;"></div><div style="position:absolute;left:777.86px;top:115.95px;width:2.66px;height:0.9px;background:#6a9955;opacity:0.4;"></div><div style="position:absolute;left:781.08px;top:115.95px;width:4.01px;height:0.9px;background:#6a9955;opacity:0.4;"></div><div style="position:absolute;left:785.77px;top:115.95px;width:4.8px;height:0.9px;background:#6a9955;opacity:0.4;"></div><div style="position:absolute;left:791.32px;top:115.95px;width:4.64px;height:0.9px;background:#6a9955;opacity:0.4;"></div><div style="position:absolute;left:796.81px;top:115.95px;width:3.07px;height:0.9px;background:#6a9955;opacity:0.4;"></div><div style="position:absolute;left:800.47px;top:115.95px;width:5.93px;height:0.9px;background:#6a9955;opacity:0.4;"></div><div style="position:absolute;left:806.92px;top:115.95px;width:4.68px;height:0.9px;background:#6a9955;opacity:0.4;"></div><div style="position:absolute;left:776.0px;top:117.85px;width:1.41px;height:0.9px;background:#cccccc;opacity:0.26;"></div><div style="position:absolute;left:778.24px;top:117.85px;width:5.48px;height:0.9px;background:#cccccc;opacity:0.26;"></div><div style="position:absolute;left:784.45px;top:117.85px;width:4.72px;height:0.9px;background:#cccccc;opacity:0.26;"></div><div style="position:absolute;left:789.99px;top:117.85px;width:1.01px;height:0.9px;background:#cccccc;opacity:0.26;"></div><div style="position:absolute;left:777.0px;top:119.25px;width:3.62px;height:0.9px;background:#cccccc;opacity:0.26;"></div><div style="position:absolute;left:781.45px;top:119.25px;width:5.06px;height:0.9px;background:#cccccc;opacity:0.26;"></div><div style="position:absolute;left:787.33px;top:119.25px;width:1.67px;height:0.9px;background:#cccccc;opacity:0.26;"></div><div style="position:absolute;left:777.0px;top:120.95px;width:4.48px;height:0.9px;background:#6a9955;opacity:0.4;"></div><div style="position:absolute;left:782.24px;top:120.95px;width:2.3px;height:0.9px;background:#6a9955;opacity:0.4;"></div><div style="position:absolute;left:785.01px;top:120.95px;width:1.84px;height:0.9px;background:#6a9955;opacity:0.4;"></div><div style="position:absolute;left:787.46px;top:120.95px;width:1.7px;height:0.9px;background:#6a9955;opacity:0.4;"></div><div style="position:absolute;left:789.99px;top:120.95px;width:3.88px;height:0.9px;background:#6a9955;opacity:0.4;"></div><div style="position:absolute;left:794.6px;top:120.95px;width:4.21px;height:0.9px;background:#6a9955;opacity:0.4;"></div><div style="position:absolute;left:799.56px;top:120.95px;width:3.55px;height:0.9px;background:#6a9955;opacity:0.4;"></div><div style="position:absolute;left:803.56px;top:120.95px;width:5.03px;height:0.9px;background:#6a9955;opacity:0.4;"></div><div style="position:absolute;left:809.38px;top:120.95px;width:3.61px;height:0.9px;background:#6a9955;opacity:0.4;"></div><div style="position:absolute;left:813.69px;top:120.95px;width:4.36px;height:0.9px;background:#6a9955;opacity:0.4;"></div><div style="position:absolute;left:777.0px;top:123.05px;width:4.74px;height:0.9px;background:#cccccc;opacity:0.26;"></div><div style="position:absolute;left:782.3px;top:123.05px;width:1.56px;height:0.9px;background:#cccccc;opacity:0.26;"></div><div style="position:absolute;left:784.43px;top:123.05px;width:1.57px;height:0.9px;background:#cccccc;opacity:0.26;"></div><div style="position:absolute;left:777.0px;top:125.15px;width:4.75px;height:0.9px;background:#cccccc;opacity:0.26;"></div><div style="position:absolute;left:782.64px;top:125.15px;width:3.57px;height:0.9px;background:#cccccc;opacity:0.26;"></div><div style="position:absolute;left:786.83px;top:125.15px;width:3.5px;height:0.9px;background:#cccccc;opacity:0.26;"></div><div style="position:absolute;left:791.09px;top:125.15px;width:4.88px;height:0.9px;background:#cccccc;opacity:0.26;"></div><div style="position:absolute;left:796.7px;top:125.15px;width:3.3px;height:0.9px;background:#cccccc;opacity:0.26;"></div><div style="position:absolute;left:778.0px;top:126.95px;width:1.91px;height:0.9px;background:#cccccc;opacity:0.26;"></div><div style="position:absolute;left:780.47px;top:126.95px;width:4.77px;height:0.9px;background:#cccccc;opacity:0.26;"></div><div style="position:absolute;left:785.83px;top:126.95px;width:3.93px;height:0.9px;background:#cccccc;opacity:0.26;"></div><div style="position:absolute;left:790.21px;top:126.95px;width:1.49px;height:0.9px;background:#cccccc;opacity:0.26;"></div><div style="position:absolute;left:792.27px;top:126.95px;width:1.73px;height:0.9px;background:#cccccc;opacity:0.26;"></div><div style="position:absolute;left:777.0px;top:129.15px;width:4.44px;height:0.9px;background:#6a9955;opacity:0.4;"></div><div style="position:absolute;left:782.02px;top:129.15px;width:3.68px;height:0.9px;background:#6a9955;opacity:0.4;"></div><div style="position:absolute;left:786.36px;top:129.15px;width:3.44px;height:0.9px;background:#6a9955;opacity:0.4;"></div><div style="position:absolute;left:790.3px;top:129.15px;width:5.49px;height:0.9px;background:#6a9955;opacity:0.4;"></div><div style="position:absolute;left:796.33px;top:129.15px;width:5.9px;height:0.9px;background:#6a9955;opacity:0.4;"></div><div style="position:absolute;left:803.1px;top:129.15px;width:1.28px;height:0.9px;background:#6a9955;opacity:0.4;"></div><div style="position:absolute;left:805.04px;top:129.15px;width:5.14px;height:0.9px;background:#6a9955;opacity:0.4;"></div><div style="position:absolute;left:811.06px;top:129.15px;width:3.36px;height:0.9px;background:#6a9955;opacity:0.4;"></div><div style="position:absolute;left:814.99px;top:129.15px;width:2.21px;height:0.9px;background:#6a9955;opacity:0.4;"></div><div style="position:absolute;left:818.07px;top:129.15px;width:0.43px;height:0.9px;background:#6a9955;opacity:0.4;"></div><div style="position:absolute;left:778.0px;top:131.05px;width:1.88px;height:0.9px;background:#cccccc;opacity:0.26;"></div><div style="position:absolute;left:780.57px;top:131.05px;width:5.77px;height:0.9px;background:#cccccc;opacity:0.26;"></div><div style="position:absolute;left:786.85px;top:131.05px;width:5.14px;height:0.9px;background:#cccccc;opacity:0.26;"></div><div style="position:absolute;left:792.66px;top:131.05px;width:5.46px;height:0.9px;background:#cccccc;opacity:0.26;"></div><div style="position:absolute;left:798.89px;top:131.05px;width:2.31px;height:0.9px;background:#cccccc;opacity:0.26;"></div><div style="position:absolute;left:802.05px;top:131.05px;width:3.53px;height:0.9px;background:#cccccc;opacity:0.26;"></div><div style="position:absolute;left:779.0px;top:132.85px;width:1.22px;height:0.9px;background:#cccccc;opacity:0.26;"></div><div style="position:absolute;left:780.89px;top:132.85px;width:3.36px;height:0.9px;background:#cccccc;opacity:0.26;"></div><div style="position:absolute;left:784.84px;top:132.85px;width:1.88px;height:0.9px;background:#cccccc;opacity:0.26;"></div><div style="position:absolute;left:787.32px;top:132.85px;width:2.72px;height:0.9px;background:#cccccc;opacity:0.26;"></div><div style="position:absolute;left:790.86px;top:132.85px;width:1.21px;height:0.9px;background:#cccccc;opacity:0.26;"></div><div style="position:absolute;left:779.0px;top:134.95px;width:5.23px;height:0.9px;background:#6a9955;opacity:0.4;"></div><div style="position:absolute;left:784.73px;top:134.95px;width:5.65px;height:0.9px;background:#6a9955;opacity:0.4;"></div><div style="position:absolute;left:791.15px;top:134.95px;width:5.53px;height:0.9px;background:#6a9955;opacity:0.4;"></div><div style="position:absolute;left:797.26px;top:134.95px;width:2.99px;height:0.9px;background:#6a9955;opacity:0.4;"></div><div style="position:absolute;left:800.87px;top:134.95px;width:4.13px;height:0.9px;background:#6a9955;opacity:0.4;"></div><div style="position:absolute;left:779.0px;top:136.05px;width:2.93px;height:0.9px;background:#cccccc;opacity:0.26;"></div><div style="position:absolute;left:782.57px;top:136.05px;width:2.52px;height:0.9px;background:#cccccc;opacity:0.26;"></div><div style="position:absolute;left:785.57px;top:136.05px;width:1.69px;height:0.9px;background:#cccccc;opacity:0.26;"></div><div style="position:absolute;left:788.08px;top:136.05px;width:2.57px;height:0.9px;background:#cccccc;opacity:0.26;"></div><div style="position:absolute;left:791.52px;top:136.05px;width:2.4px;height:0.9px;background:#cccccc;opacity:0.26;"></div><div style="position:absolute;left:794.49px;top:136.05px;width:2.51px;height:0.9px;background:#cccccc;opacity:0.26;"></div><div style="position:absolute;left:777.0px;top:138.15px;width:2.99px;height:0.9px;background:#6a9955;opacity:0.4;"></div><div style="position:absolute;left:780.87px;top:138.15px;width:5.44px;height:0.9px;background:#6a9955;opacity:0.4;"></div><div style="position:absolute;left:787.13px;top:138.15px;width:4.23px;height:0.9px;background:#6a9955;opacity:0.4;"></div><div style="position:absolute;left:792.22px;top:138.15px;width:5.72px;height:0.9px;background:#6a9955;opacity:0.4;"></div><div style="position:absolute;left:798.63px;top:138.15px;width:4.65px;height:0.9px;background:#6a9955;opacity:0.4;"></div><div style="position:absolute;left:803.76px;top:138.15px;width:4.24px;height:0.9px;background:#6a9955;opacity:0.4;"></div><div style="position:absolute;left:779.0px;top:139.25px;width:4.81px;height:0.9px;background:#cccccc;opacity:0.26;"></div><div style="position:absolute;left:777.0px;top:140.95px;width:2.57px;height:0.9px;background:#6a9955;opacity:0.4;"></div><div style="position:absolute;left:780.05px;top:140.95px;width:5.65px;height:0.9px;background:#6a9955;opacity:0.4;"></div><div style="position:absolute;left:786.2px;top:140.95px;width:3.47px;height:0.9px;background:#6a9955;opacity:0.4;"></div><div style="position:absolute;left:790.27px;top:140.95px;width:2.63px;height:0.9px;background:#6a9955;opacity:0.4;"></div><div style="position:absolute;left:793.68px;top:140.95px;width:5.89px;height:0.9px;background:#6a9955;opacity:0.4;"></div><div style="position:absolute;left:800.14px;top:140.95px;width:3.86px;height:0.9px;background:#6a9955;opacity:0.4;"></div><div style="position:absolute;left:777.0px;top:142.05px;width:3.88px;height:0.9px;background:#cccccc;opacity:0.26;"></div><div style="position:absolute;left:781.5px;top:142.05px;width:2.0px;height:0.9px;background:#cccccc;opacity:0.26;"></div><div style="position:absolute;left:784.03px;top:142.05px;width:2.2px;height:0.9px;background:#cccccc;opacity:0.26;"></div><div style="position:absolute;left:787.08px;top:142.05px;width:3.59px;height:0.9px;background:#cccccc;opacity:0.26;"></div><div style="position:absolute;left:791.22px;top:142.05px;width:5.55px;height:0.9px;background:#cccccc;opacity:0.26;"></div><div style="position:absolute;left:778.0px;top:144.25px;width:3.36px;height:0.9px;background:#cccccc;opacity:0.26;"></div><div style="position:absolute;left:781.87px;top:144.25px;width:2.12px;height:0.9px;background:#cccccc;opacity:0.26;"></div><div style="position:absolute;left:784.49px;top:144.25px;width:2.84px;height:0.9px;background:#cccccc;opacity:0.26;"></div><div style="position:absolute;left:787.82px;top:144.25px;width:2.35px;height:0.9px;background:#cccccc;opacity:0.26;"></div><div style="position:absolute;left:790.73px;top:144.25px;width:3.93px;height:0.9px;background:#cccccc;opacity:0.26;"></div><div style="position:absolute;left:795.52px;top:144.25px;width:4.8px;height:0.9px;background:#cccccc;opacity:0.26;"></div><div style="position:absolute;left:800.95px;top:144.25px;width:3.19px;height:0.9px;background:#cccccc;opacity:0.26;"></div><div style="position:absolute;left:804.82px;top:144.25px;width:3.01px;height:0.9px;background:#cccccc;opacity:0.26;"></div><div style="position:absolute;left:774.0px;top:147.05px;width:1.5px;height:0.9px;background:#6a9955;opacity:0.4;"></div><div style="position:absolute;left:776.07px;top:147.05px;width:5.84px;height:0.9px;background:#6a9955;opacity:0.4;"></div><div style="position:absolute;left:782.42px;top:147.05px;width:3.62px;height:0.9px;background:#6a9955;opacity:0.4;"></div><div style="position:absolute;left:786.77px;top:147.05px;width:2.23px;height:0.9px;background:#6a9955;opacity:0.4;"></div><div style="position:absolute;left:776.0px;top:149.45px;width:2.5px;height:0.9px;background:#ce9178;opacity:0.34;"></div><div style="position:absolute;left:779.06px;top:149.45px;width:3.12px;height:0.9px;background:#ce9178;opacity:0.34;"></div><div style="position:absolute;left:782.83px;top:149.45px;width:5.78px;height:0.9px;background:#ce9178;opacity:0.34;"></div><div style="position:absolute;left:789.44px;top:149.45px;width:5.39px;height:0.9px;background:#ce9178;opacity:0.34;"></div><div style="position:absolute;left:795.29px;top:149.45px;width:1.35px;height:0.9px;background:#ce9178;opacity:0.34;"></div><div style="position:absolute;left:797.42px;top:149.45px;width:0.58px;height:0.9px;background:#ce9178;opacity:0.34;"></div><div style="position:absolute;left:776.0px;top:151.15px;width:4.02px;height:0.9px;background:#cccccc;opacity:0.26;"></div><div style="position:absolute;left:780.47px;top:151.15px;width:3.08px;height:0.9px;background:#cccccc;opacity:0.26;"></div><div style="position:absolute;left:784.41px;top:151.15px;width:5.16px;height:0.9px;background:#cccccc;opacity:0.26;"></div><div style="position:absolute;left:790.41px;top:151.15px;width:5.87px;height:0.9px;background:#cccccc;opacity:0.26;"></div><div style="position:absolute;left:796.84px;top:151.15px;width:1.16px;height:0.9px;background:#cccccc;opacity:0.26;"></div><div style="position:absolute;left:772.0px;top:154.05px;width:3.71px;height:0.9px;background:#cccccc;opacity:0.26;"></div><div style="position:absolute;left:776.46px;top:154.05px;width:5.72px;height:0.9px;background:#cccccc;opacity:0.26;"></div><div style="position:absolute;left:782.96px;top:154.05px;width:4.31px;height:0.9px;background:#cccccc;opacity:0.26;"></div><div style="position:absolute;left:788.06px;top:154.05px;width:2.94px;height:0.9px;background:#cccccc;opacity:0.26;"></div><div style="position:absolute;left:774.0px;top:155.15px;width:1.39px;height:0.9px;background:#cccccc;opacity:0.26;"></div><div style="position:absolute;left:776.19px;top:155.15px;width:1.81px;height:0.9px;background:#cccccc;opacity:0.26;"></div><div style="position:absolute;left:774.0px;top:157.05px;width:4.3px;height:0.9px;background:#cccccc;opacity:0.26;"></div><div style="position:absolute;left:778.89px;top:157.05px;width:1.81px;height:0.9px;background:#cccccc;opacity:0.26;"></div><div style="position:absolute;left:781.26px;top:157.05px;width:4.25px;height:0.9px;background:#cccccc;opacity:0.26;"></div><div style="position:absolute;left:786.28px;top:157.05px;width:0.72px;height:0.9px;background:#cccccc;opacity:0.26;"></div><div style="position:absolute;left:776.0px;top:158.85px;width:3.72px;height:0.9px;background:#cccccc;opacity:0.26;"></div><div style="position:absolute;left:780.43px;top:158.85px;width:0.57px;height:0.9px;background:#cccccc;opacity:0.26;"></div><div style="position:absolute;left:776.0px;top:160.75px;width:4.09px;height:0.9px;background:#cccccc;opacity:0.26;"></div><div style="position:absolute;left:780.54px;top:160.75px;width:0.46px;height:0.9px;background:#cccccc;opacity:0.26;"></div><div style="position:absolute;left:775.0px;top:161.55px;width:5.0px;height:0.9px;background:#cccccc;opacity:0.26;"></div><div style="position:absolute;left:774.0px;top:163.15px;width:5.44px;height:0.9px;background:#cccccc;opacity:0.26;"></div><div style="position:absolute;left:780.11px;top:163.15px;width:2.33px;height:0.9px;background:#cccccc;opacity:0.26;"></div><div style="position:absolute;left:782.99px;top:163.15px;width:2.01px;height:0.9px;background:#cccccc;opacity:0.26;"></div><div style="position:absolute;left:773.0px;top:166.65px;width:2.68px;height:0.9px;background:#569cd6;opacity:0.34;"></div><div style="position:absolute;left:776.14px;top:166.65px;width:3.59px;height:0.9px;background:#569cd6;opacity:0.34;"></div><div style="position:absolute;left:780.48px;top:166.65px;width:3.22px;height:0.9px;background:#569cd6;opacity:0.34;"></div><div style="position:absolute;left:784.26px;top:166.65px;width:4.4px;height:0.9px;background:#569cd6;opacity:0.34;"></div><div style="position:absolute;left:789.53px;top:166.65px;width:2.29px;height:0.9px;background:#569cd6;opacity:0.34;"></div><div style="position:absolute;left:792.29px;top:166.65px;width:2.82px;height:0.9px;background:#569cd6;opacity:0.34;"></div><div style="position:absolute;left:795.75px;top:166.65px;width:3.25px;height:0.9px;background:#569cd6;opacity:0.34;"></div><div style="position:absolute;left:776.0px;top:167.55px;width:5.03px;height:0.9px;background:#cccccc;opacity:0.26;"></div><div style="position:absolute;left:781.81px;top:167.55px;width:3.19px;height:0.9px;background:#cccccc;opacity:0.26;"></div><div style="position:absolute;left:777.0px;top:169.05px;width:5.86px;height:0.9px;background:#6a9955;opacity:0.4;"></div><div style="position:absolute;left:783.45px;top:169.05px;width:5.14px;height:0.9px;background:#6a9955;opacity:0.4;"></div><div style="position:absolute;left:789.14px;top:169.05px;width:2.26px;height:0.9px;background:#6a9955;opacity:0.4;"></div><div style="position:absolute;left:792.19px;top:169.05px;width:2.62px;height:0.9px;background:#6a9955;opacity:0.4;"></div><div style="position:absolute;left:795.68px;top:169.05px;width:1.32px;height:0.9px;background:#6a9955;opacity:0.4;"></div><div style="position:absolute;left:777.0px;top:170.35px;width:2.27px;height:0.9px;background:#cccccc;opacity:0.26;"></div><div style="position:absolute;left:779.91px;top:170.35px;width:4.39px;height:0.9px;background:#cccccc;opacity:0.26;"></div><div style="position:absolute;left:785.18px;top:170.35px;width:1.9px;height:0.9px;background:#cccccc;opacity:0.26;"></div><div style="position:absolute;left:787.71px;top:170.35px;width:2.22px;height:0.9px;background:#cccccc;opacity:0.26;"></div><div style="position:absolute;left:790.82px;top:170.35px;width:1.88px;height:0.9px;background:#cccccc;opacity:0.26;"></div><div style="position:absolute;left:774.0px;top:172.05px;width:1.49px;height:0.9px;background:#cccccc;opacity:0.26;"></div><div style="position:absolute;left:776.12px;top:172.05px;width:5.51px;height:0.9px;background:#cccccc;opacity:0.26;"></div><div style="position:absolute;left:782.47px;top:172.05px;width:4.72px;height:0.9px;background:#cccccc;opacity:0.26;"></div><div style="position:absolute;left:788.09px;top:172.05px;width:2.91px;height:0.9px;background:#cccccc;opacity:0.26;"></div><div style="position:absolute;left:773.0px;top:173.75px;width:2.09px;height:0.9px;background:#cccccc;opacity:0.26;"></div><div style="position:absolute;left:775.96px;top:173.75px;width:4.78px;height:0.9px;background:#cccccc;opacity:0.26;"></div><div style="position:absolute;left:781.21px;top:173.75px;width:4.39px;height:0.9px;background:#cccccc;opacity:0.26;"></div><div style="position:absolute;left:786.22px;top:173.75px;width:2.99px;height:0.9px;background:#cccccc;opacity:0.26;"></div><div style="position:absolute;left:789.81px;top:173.75px;width:2.01px;height:0.9px;background:#cccccc;opacity:0.26;"></div><div style="position:absolute;left:792.28px;top:173.75px;width:2.54px;height:0.9px;background:#cccccc;opacity:0.26;"></div><div style="position:absolute;left:795.43px;top:173.75px;width:5.79px;height:0.9px;background:#cccccc;opacity:0.26;"></div><div style="position:absolute;left:801.72px;top:173.75px;width:5.83px;height:0.9px;background:#cccccc;opacity:0.26;"></div><div style="position:absolute;left:808.09px;top:173.75px;width:2.91px;height:0.9px;background:#cccccc;opacity:0.26;"></div><div style="position:absolute;left:811.82px;top:173.75px;width:5.15px;height:0.9px;background:#cccccc;opacity:0.26;"></div><div style="position:absolute;left:817.61px;top:173.75px;width:0.89px;height:0.9px;background:#cccccc;opacity:0.26;"></div><div style="position:absolute;left:774.0px;top:175.65px;width:2.99px;height:0.9px;background:#ce9178;opacity:0.34;"></div><div style="position:absolute;left:777.85px;top:175.65px;width:2.13px;height:0.9px;background:#ce9178;opacity:0.34;"></div><div style="position:absolute;left:780.59px;top:175.65px;width:5.51px;height:0.9px;background:#ce9178;opacity:0.34;"></div><div style="position:absolute;left:786.56px;top:175.65px;width:3.17px;height:0.9px;background:#ce9178;opacity:0.34;"></div><div style="position:absolute;left:790.55px;top:175.65px;width:4.88px;height:0.9px;background:#ce9178;opacity:0.34;"></div><div style="position:absolute;left:795.9px;top:175.65px;width:1.37px;height:0.9px;background:#ce9178;opacity:0.34;"></div><div style="position:absolute;left:797.74px;top:175.65px;width:5.62px;height:0.9px;background:#ce9178;opacity:0.34;"></div><div style="position:absolute;left:803.93px;top:175.65px;width:4.79px;height:0.9px;background:#ce9178;opacity:0.34;"></div><div style="position:absolute;left:809.57px;top:175.65px;width:2.83px;height:0.9px;background:#ce9178;opacity:0.34;"></div><div style="position:absolute;left:812.97px;top:175.65px;width:5.53px;height:0.9px;background:#ce9178;opacity:0.34;"></div><div style="position:absolute;left:774.0px;top:176.75px;width:2.46px;height:0.9px;background:#ce9178;opacity:0.34;"></div><div style="position:absolute;left:777.23px;top:176.75px;width:2.72px;height:0.9px;background:#ce9178;opacity:0.34;"></div><div style="position:absolute;left:780.52px;top:176.75px;width:1.22px;height:0.9px;background:#ce9178;opacity:0.34;"></div><div style="position:absolute;left:782.53px;top:176.75px;width:3.47px;height:0.9px;background:#ce9178;opacity:0.34;"></div><div style="position:absolute;left:774.0px;top:179.05px;width:5.73px;height:0.9px;background:#ce9178;opacity:0.34;"></div><div style="position:absolute;left:780.19px;top:179.05px;width:2.32px;height:0.9px;background:#ce9178;opacity:0.34;"></div><div style="position:absolute;left:783.17px;top:179.05px;width:5.79px;height:0.9px;background:#ce9178;opacity:0.34;"></div><div style="position:absolute;left:789.85px;top:179.05px;width:3.06px;height:0.9px;background:#ce9178;opacity:0.34;"></div><div style="position:absolute;left:793.46px;top:179.05px;width:3.26px;height:0.9px;background:#ce9178;opacity:0.34;"></div><div style="position:absolute;left:797.4px;top:179.05px;width:5.65px;height:0.9px;background:#ce9178;opacity:0.34;"></div><div style="position:absolute;left:803.59px;top:179.05px;width:2.41px;height:0.9px;background:#ce9178;opacity:0.34;"></div><div style="position:absolute;left:774.0px;top:179.95px;width:5.15px;height:0.9px;background:#ce9178;opacity:0.34;"></div><div style="position:absolute;left:779.95px;top:179.95px;width:4.11px;height:0.9px;background:#ce9178;opacity:0.34;"></div><div style="position:absolute;left:784.66px;top:179.95px;width:2.73px;height:0.9px;background:#ce9178;opacity:0.34;"></div><div style="position:absolute;left:788.01px;top:179.95px;width:4.95px;height:0.9px;background:#ce9178;opacity:0.34;"></div><div style="position:absolute;left:793.45px;top:179.95px;width:2.15px;height:0.9px;background:#ce9178;opacity:0.34;"></div><div style="position:absolute;left:796.38px;top:179.95px;width:2.39px;height:0.9px;background:#ce9178;opacity:0.34;"></div><div style="position:absolute;left:799.25px;top:179.95px;width:1.36px;height:0.9px;background:#ce9178;opacity:0.34;"></div><div style="position:absolute;left:801.31px;top:179.95px;width:2.76px;height:0.9px;background:#ce9178;opacity:0.34;"></div><div style="position:absolute;left:804.96px;top:179.95px;width:1.04px;height:0.9px;background:#ce9178;opacity:0.34;"></div><div style="position:absolute;left:774.0px;top:180.85px;width:2.47px;height:0.9px;background:#ce9178;opacity:0.34;"></div><div style="position:absolute;left:776.96px;top:180.85px;width:1.66px;height:0.9px;background:#ce9178;opacity:0.34;"></div><div style="position:absolute;left:779.3px;top:180.85px;width:4.61px;height:0.9px;background:#ce9178;opacity:0.34;"></div><div style="position:absolute;left:784.55px;top:180.85px;width:2.32px;height:0.9px;background:#ce9178;opacity:0.34;"></div><div style="position:absolute;left:787.52px;top:180.85px;width:4.18px;height:0.9px;background:#ce9178;opacity:0.34;"></div><div style="position:absolute;left:792.45px;top:180.85px;width:4.79px;height:0.9px;background:#ce9178;opacity:0.34;"></div><div style="position:absolute;left:798.07px;top:180.85px;width:4.39px;height:0.9px;background:#ce9178;opacity:0.34;"></div><div style="position:absolute;left:802.96px;top:180.85px;width:3.04px;height:0.9px;background:#ce9178;opacity:0.34;"></div><div style="position:absolute;left:774.0px;top:182.25px;width:3.92px;height:0.9px;background:#ce9178;opacity:0.34;"></div><div style="position:absolute;left:778.54px;top:182.25px;width:4.74px;height:0.9px;background:#ce9178;opacity:0.34;"></div><div style="position:absolute;left:783.82px;top:182.25px;width:2.39px;height:0.9px;background:#ce9178;opacity:0.34;"></div><div style="position:absolute;left:786.77px;top:182.25px;width:1.94px;height:0.9px;background:#ce9178;opacity:0.34;"></div><div style="position:absolute;left:789.55px;top:182.25px;width:3.98px;height:0.9px;background:#ce9178;opacity:0.34;"></div><div style="position:absolute;left:794.13px;top:182.25px;width:3.1px;height:0.9px;background:#ce9178;opacity:0.34;"></div><div style="position:absolute;left:798.12px;top:182.25px;width:3.64px;height:0.9px;background:#ce9178;opacity:0.34;"></div><div style="position:absolute;left:802.31px;top:182.25px;width:5.08px;height:0.9px;background:#ce9178;opacity:0.34;"></div><div style="position:absolute;left:808.14px;top:182.25px;width:5.96px;height:0.9px;background:#ce9178;opacity:0.34;"></div><div style="position:absolute;left:814.59px;top:182.25px;width:3.48px;height:0.9px;background:#ce9178;opacity:0.34;"></div><div style="position:absolute;left:774.0px;top:184.85px;width:5.23px;height:0.9px;background:#ce9178;opacity:0.34;"></div><div style="position:absolute;left:780.1px;top:184.85px;width:1.39px;height:0.9px;background:#ce9178;opacity:0.34;"></div><div style="position:absolute;left:782.07px;top:184.85px;width:1.77px;height:0.9px;background:#ce9178;opacity:0.34;"></div><div style="position:absolute;left:784.38px;top:184.85px;width:5.87px;height:0.9px;background:#ce9178;opacity:0.34;"></div><div style="position:absolute;left:790.96px;top:184.85px;width:5.66px;height:0.9px;background:#ce9178;opacity:0.34;"></div><div style="position:absolute;left:797.24px;top:184.85px;width:5.36px;height:0.9px;background:#ce9178;opacity:0.34;"></div><div style="position:absolute;left:803.25px;top:184.85px;width:2.45px;height:0.9px;background:#ce9178;opacity:0.34;"></div><div style="position:absolute;left:806.5px;top:184.85px;width:5.74px;height:0.9px;background:#ce9178;opacity:0.34;"></div><div style="position:absolute;left:812.74px;top:184.85px;width:4.06px;height:0.9px;background:#ce9178;opacity:0.34;"></div><div style="position:absolute;left:817.53px;top:184.85px;width:0.47px;height:0.9px;background:#ce9178;opacity:0.34;"></div><div style="position:absolute;left:774.0px;top:187.15px;width:1.88px;height:0.9px;background:#ce9178;opacity:0.34;"></div><div style="position:absolute;left:774.0px;top:188.55px;width:2.42px;height:0.9px;background:#6a9955;opacity:0.4;"></div><div style="position:absolute;left:777.14px;top:188.55px;width:4.33px;height:0.9px;background:#6a9955;opacity:0.4;"></div><div style="position:absolute;left:782.01px;top:188.55px;width:1.25px;height:0.9px;background:#6a9955;opacity:0.4;"></div><div style="position:absolute;left:783.86px;top:188.55px;width:4.46px;height:0.9px;background:#6a9955;opacity:0.4;"></div><div style="position:absolute;left:788.85px;top:188.55px;width:2.7px;height:0.9px;background:#6a9955;opacity:0.4;"></div><div style="position:absolute;left:792.09px;top:188.55px;width:4.91px;height:0.9px;background:#6a9955;opacity:0.4;"></div><div style="position:absolute;left:774.0px;top:189.85px;width:1.5px;height:0.9px;background:#cccccc;opacity:0.26;"></div><div style="position:absolute;left:776.0px;top:189.85px;width:3.1px;height:0.9px;background:#cccccc;opacity:0.26;"></div><div style="position:absolute;left:779.79px;top:189.85px;width:4.27px;height:0.9px;background:#cccccc;opacity:0.26;"></div><div style="position:absolute;left:784.55px;top:189.85px;width:1.99px;height:0.9px;background:#cccccc;opacity:0.26;"></div><div style="position:absolute;left:787.3px;top:189.85px;width:3.17px;height:0.9px;background:#cccccc;opacity:0.26;"></div><div style="position:absolute;left:791.05px;top:189.85px;width:2.68px;height:0.9px;background:#cccccc;opacity:0.26;"></div><div style="position:absolute;left:794.6px;top:189.85px;width:2.4px;height:0.9px;background:#cccccc;opacity:0.26;"></div><div style="position:absolute;left:774.0px;top:190.85px;width:2.91px;height:0.9px;background:#cccccc;opacity:0.26;"></div><div style="position:absolute;left:777.55px;top:190.85px;width:0.45px;height:0.9px;background:#cccccc;opacity:0.26;"></div><div style="position:absolute;left:774.0px;top:193.05px;width:2.95px;height:0.9px;background:#6a9955;opacity:0.4;"></div><div style="position:absolute;left:777.48px;top:193.05px;width:4.69px;height:0.9px;background:#6a9955;opacity:0.4;"></div><div style="position:absolute;left:782.72px;top:193.05px;width:1.23px;height:0.9px;background:#6a9955;opacity:0.4;"></div><div style="position:absolute;left:784.81px;top:193.05px;width:3.23px;height:0.9px;background:#6a9955;opacity:0.4;"></div><div style="position:absolute;left:788.86px;top:193.05px;width:3.15px;height:0.9px;background:#6a9955;opacity:0.4;"></div><div style="position:absolute;left:792.86px;top:193.05px;width:3.41px;height:0.9px;background:#6a9955;opacity:0.4;"></div><div style="position:absolute;left:775.0px;top:194.05px;width:1.27px;height:0.9px;background:#cccccc;opacity:0.26;"></div><div style="position:absolute;left:776.97px;top:194.05px;width:4.28px;height:0.9px;background:#cccccc;opacity:0.26;"></div><div style="position:absolute;left:782.1px;top:194.05px;width:1.63px;height:0.9px;background:#cccccc;opacity:0.26;"></div><div style="position:absolute;left:784.46px;top:194.05px;width:2.98px;height:0.9px;background:#cccccc;opacity:0.26;"></div><div style="position:absolute;left:788.12px;top:194.05px;width:1.9px;height:0.9px;background:#cccccc;opacity:0.26;"></div><div style="position:absolute;left:790.6px;top:194.05px;width:3.7px;height:0.9px;background:#cccccc;opacity:0.26;"></div><div style="position:absolute;left:795.16px;top:194.05px;width:1.72px;height:0.9px;background:#cccccc;opacity:0.26;"></div><div style="position:absolute;left:797.56px;top:194.05px;width:0.44px;height:0.9px;background:#cccccc;opacity:0.26;"></div><div style="position:absolute;left:777.0px;top:195.25px;width:2.15px;height:0.9px;background:#cccccc;opacity:0.26;"></div><div style="position:absolute;left:779.65px;top:195.25px;width:2.35px;height:0.9px;background:#cccccc;opacity:0.26;"></div><div style="position:absolute;left:778.0px;top:196.65px;width:2.0px;height:0.9px;background:#cccccc;opacity:0.26;"></div><div style="position:absolute;left:778.0px;top:198.05px;width:5.65px;height:0.9px;background:#6a9955;opacity:0.4;"></div><div style="position:absolute;left:784.27px;top:198.05px;width:5.54px;height:0.9px;background:#6a9955;opacity:0.4;"></div><div style="position:absolute;left:790.54px;top:198.05px;width:5.16px;height:0.9px;background:#6a9955;opacity:0.4;"></div><div style="position:absolute;left:796.22px;top:198.05px;width:4.97px;height:0.9px;background:#6a9955;opacity:0.4;"></div><div style="position:absolute;left:801.74px;top:198.05px;width:3.14px;height:0.9px;background:#6a9955;opacity:0.4;"></div><div style="position:absolute;left:805.71px;top:198.05px;width:5.18px;height:0.9px;background:#6a9955;opacity:0.4;"></div><div style="position:absolute;left:777.0px;top:200.05px;width:2.25px;height:0.9px;background:#6a9955;opacity:0.4;"></div><div style="position:absolute;left:779.88px;top:200.05px;width:3.69px;height:0.9px;background:#6a9955;opacity:0.4;"></div><div style="position:absolute;left:784.19px;top:200.05px;width:1.79px;height:0.9px;background:#6a9955;opacity:0.4;"></div><div style="position:absolute;left:786.54px;top:200.05px;width:4.68px;height:0.9px;background:#6a9955;opacity:0.4;"></div><div style="position:absolute;left:792.07px;top:200.05px;width:1.4px;height:0.9px;background:#6a9955;opacity:0.4;"></div><div style="position:absolute;left:794.17px;top:200.05px;width:4.84px;height:0.9px;background:#6a9955;opacity:0.4;"></div><div style="position:absolute;left:799.47px;top:200.05px;width:5.22px;height:0.9px;background:#6a9955;opacity:0.4;"></div><div style="position:absolute;left:779.0px;top:201.85px;width:4.08px;height:0.9px;background:#cccccc;opacity:0.26;"></div><div style="position:absolute;left:783.78px;top:201.85px;width:4.21px;height:0.9px;background:#cccccc;opacity:0.26;"></div><div style="position:absolute;left:788.57px;top:201.85px;width:3.22px;height:0.9px;background:#cccccc;opacity:0.26;"></div><div style="position:absolute;left:792.5px;top:201.85px;width:3.24px;height:0.9px;background:#cccccc;opacity:0.26;"></div><div style="position:absolute;left:796.49px;top:201.85px;width:3.34px;height:0.9px;background:#cccccc;opacity:0.26;"></div><div style="position:absolute;left:779.0px;top:203.05px;width:1.31px;height:0.9px;background:#cccccc;opacity:0.26;"></div><div style="position:absolute;left:781.04px;top:203.05px;width:1.96px;height:0.9px;background:#cccccc;opacity:0.26;"></div><div style="position:absolute;left:777.0px;top:205.75px;width:4.87px;height:0.9px;background:#6a9955;opacity:0.4;"></div><div style="position:absolute;left:782.67px;top:205.75px;width:3.4px;height:0.9px;background:#6a9955;opacity:0.4;"></div><div style="position:absolute;left:786.6px;top:205.75px;width:3.47px;height:0.9px;background:#6a9955;opacity:0.4;"></div><div style="position:absolute;left:790.57px;top:205.75px;width:1.82px;height:0.9px;background:#6a9955;opacity:0.4;"></div><div style="position:absolute;left:793.03px;top:205.75px;width:1.64px;height:0.9px;background:#6a9955;opacity:0.4;"></div><div style="position:absolute;left:795.32px;top:205.75px;width:3.65px;height:0.9px;background:#6a9955;opacity:0.4;"></div><div style="position:absolute;left:799.43px;top:205.75px;width:4.25px;height:0.9px;background:#6a9955;opacity:0.4;"></div><div style="position:absolute;left:804.17px;top:205.75px;width:4.72px;height:0.9px;background:#6a9955;opacity:0.4;"></div><div style="position:absolute;left:809.7px;top:205.75px;width:3.66px;height:0.9px;background:#6a9955;opacity:0.4;"></div><div style="position:absolute;left:813.82px;top:205.75px;width:3.62px;height:0.9px;background:#6a9955;opacity:0.4;"></div><div style="position:absolute;left:818.06px;top:205.75px;width:0.44px;height:0.9px;background:#6a9955;opacity:0.4;"></div><div style="position:absolute;left:778.0px;top:207.05px;width:5.31px;height:0.9px;background:#cccccc;opacity:0.26;"></div><div style="position:absolute;left:784.21px;top:207.05px;width:4.71px;height:0.9px;background:#cccccc;opacity:0.26;"></div><div style="position:absolute;left:789.74px;top:207.05px;width:2.13px;height:0.9px;background:#cccccc;opacity:0.26;"></div><div style="position:absolute;left:792.76px;top:207.05px;width:3.56px;height:0.9px;background:#cccccc;opacity:0.26;"></div><div style="position:absolute;left:797.21px;top:207.05px;width:2.79px;height:0.9px;background:#cccccc;opacity:0.26;"></div><div style="position:absolute;left:777.0px;top:208.95px;width:4.98px;height:0.9px;background:#6a9955;opacity:0.4;"></div><div style="position:absolute;left:782.85px;top:208.95px;width:1.51px;height:0.9px;background:#6a9955;opacity:0.4;"></div><div style="position:absolute;left:784.98px;top:208.95px;width:4.83px;height:0.9px;background:#6a9955;opacity:0.4;"></div><div style="position:absolute;left:790.33px;top:208.95px;width:5.5px;height:0.9px;background:#6a9955;opacity:0.4;"></div><div style="position:absolute;left:796.4px;top:208.95px;width:5.12px;height:0.9px;background:#6a9955;opacity:0.4;"></div><div style="position:absolute;left:802.03px;top:208.95px;width:3.61px;height:0.9px;background:#6a9955;opacity:0.4;"></div><div style="position:absolute;left:806.51px;top:208.95px;width:2.2px;height:0.9px;background:#6a9955;opacity:0.4;"></div><div style="position:absolute;left:809.28px;top:208.95px;width:3.63px;height:0.9px;background:#6a9955;opacity:0.4;"></div><div style="position:absolute;left:813.5px;top:208.95px;width:1.38px;height:0.9px;background:#6a9955;opacity:0.4;"></div><div style="position:absolute;left:815.41px;top:208.95px;width:1.97px;height:0.9px;background:#6a9955;opacity:0.4;"></div><div style="position:absolute;left:778.0px;top:210.85px;width:4.46px;height:0.9px;background:#cccccc;opacity:0.26;"></div><div style="position:absolute;left:783.32px;top:210.85px;width:2.01px;height:0.9px;background:#cccccc;opacity:0.26;"></div><div style="position:absolute;left:786.13px;top:210.85px;width:1.75px;height:0.9px;background:#cccccc;opacity:0.26;"></div><div style="position:absolute;left:788.57px;top:210.85px;width:3.43px;height:0.9px;background:#cccccc;opacity:0.26;"></div><div style="position:absolute;left:779.0px;top:212.85px;width:5.39px;height:0.9px;background:#6a9955;opacity:0.4;"></div><div style="position:absolute;left:785.09px;top:212.85px;width:3.98px;height:0.9px;background:#6a9955;opacity:0.4;"></div><div style="position:absolute;left:789.92px;top:212.85px;width:1.7px;height:0.9px;background:#6a9955;opacity:0.4;"></div><div style="position:absolute;left:792.52px;top:212.85px;width:4.22px;height:0.9px;background:#6a9955;opacity:0.4;"></div><div style="position:absolute;left:797.37px;top:212.85px;width:5.03px;height:0.9px;background:#6a9955;opacity:0.4;"></div><div style="position:absolute;left:802.97px;top:212.85px;width:5.95px;height:0.9px;background:#6a9955;opacity:0.4;"></div><div style="position:absolute;left:809.63px;top:212.85px;width:2.93px;height:0.9px;background:#6a9955;opacity:0.4;"></div><div style="position:absolute;left:813.36px;top:212.85px;width:3.32px;height:0.9px;background:#6a9955;opacity:0.4;"></div><div style="position:absolute;left:817.21px;top:212.85px;width:1.29px;height:0.9px;background:#6a9955;opacity:0.4;"></div><div style="position:absolute;left:780.0px;top:213.95px;width:5.14px;height:0.9px;background:#cccccc;opacity:0.26;"></div><div style="position:absolute;left:785.7px;top:213.95px;width:4.27px;height:0.9px;background:#cccccc;opacity:0.26;"></div><div style="position:absolute;left:790.86px;top:213.95px;width:4.01px;height:0.9px;background:#cccccc;opacity:0.26;"></div><div style="position:absolute;left:795.62px;top:213.95px;width:2.38px;height:0.9px;background:#cccccc;opacity:0.26;"></div><div style="position:absolute;left:781.0px;top:215.95px;width:1.36px;height:0.9px;background:#6a9955;opacity:0.4;"></div><div style="position:absolute;left:782.88px;top:215.95px;width:4.16px;height:0.9px;background:#6a9955;opacity:0.4;"></div><div style="position:absolute;left:787.68px;top:215.95px;width:3.66px;height:0.9px;background:#6a9955;opacity:0.4;"></div><div style="position:absolute;left:792.19px;top:215.95px;width:1.83px;height:0.9px;background:#6a9955;opacity:0.4;"></div><div style="position:absolute;left:794.58px;top:215.95px;width:4.33px;height:0.9px;background:#6a9955;opacity:0.4;"></div><div style="position:absolute;left:799.38px;top:215.95px;width:1.21px;height:0.9px;background:#6a9955;opacity:0.4;"></div><div style="position:absolute;left:801.2px;top:215.95px;width:1.71px;height:0.9px;background:#6a9955;opacity:0.4;"></div><div style="position:absolute;left:803.52px;top:215.95px;width:2.28px;height:0.9px;background:#6a9955;opacity:0.4;"></div><div style="position:absolute;left:806.51px;top:215.95px;width:4.03px;height:0.9px;background:#6a9955;opacity:0.4;"></div><div style="position:absolute;left:811.08px;top:215.95px;width:4.19px;height:0.9px;background:#6a9955;opacity:0.4;"></div><div style="position:absolute;left:815.94px;top:215.95px;width:1.85px;height:0.9px;background:#6a9955;opacity:0.4;"></div><div style="position:absolute;left:781.0px;top:217.35px;width:2.37px;height:0.9px;background:#cccccc;opacity:0.26;"></div><div style="position:absolute;left:783.89px;top:217.35px;width:1.66px;height:0.9px;background:#cccccc;opacity:0.26;"></div><div style="position:absolute;left:786.28px;top:217.35px;width:4.72px;height:0.9px;background:#cccccc;opacity:0.26;"></div><div style="position:absolute;left:779.0px;top:219.95px;width:3.13px;height:0.9px;background:#6a9955;opacity:0.4;"></div><div style="position:absolute;left:782.7px;top:219.95px;width:1.26px;height:0.9px;background:#6a9955;opacity:0.4;"></div><div style="position:absolute;left:784.69px;top:219.95px;width:3.9px;height:0.9px;background:#6a9955;opacity:0.4;"></div><div style="position:absolute;left:789.2px;top:219.95px;width:4.3px;height:0.9px;background:#6a9955;opacity:0.4;"></div><div style="position:absolute;left:794.15px;top:219.95px;width:5.7px;height:0.9px;background:#6a9955;opacity:0.4;"></div><div style="position:absolute;left:800.63px;top:219.95px;width:2.39px;height:0.9px;background:#6a9955;opacity:0.4;"></div><div style="position:absolute;left:803.88px;top:219.95px;width:1.41px;height:0.9px;background:#6a9955;opacity:0.4;"></div><div style="position:absolute;left:805.98px;top:219.95px;width:3.15px;height:0.9px;background:#6a9955;opacity:0.4;"></div><div style="position:absolute;left:809.68px;top:219.95px;width:1.48px;height:0.9px;background:#6a9955;opacity:0.4;"></div><div style="position:absolute;left:811.96px;top:219.95px;width:1.26px;height:0.9px;background:#6a9955;opacity:0.4;"></div><div style="position:absolute;left:813.92px;top:219.95px;width:4.58px;height:0.9px;background:#6a9955;opacity:0.4;"></div><div style="position:absolute;left:781.0px;top:221.55px;width:2.16px;height:0.9px;background:#cccccc;opacity:0.26;"></div><div style="position:absolute;left:783.88px;top:221.55px;width:3.63px;height:0.9px;background:#cccccc;opacity:0.26;"></div><div style="position:absolute;left:788.25px;top:221.55px;width:2.75px;height:0.9px;background:#cccccc;opacity:0.26;"></div><div style="position:absolute;left:778.0px;top:224.55px;width:2.69px;height:0.9px;background:#6a9955;opacity:0.4;"></div><div style="position:absolute;left:781.27px;top:224.55px;width:1.43px;height:0.9px;background:#6a9955;opacity:0.4;"></div><div style="position:absolute;left:783.55px;top:224.55px;width:4.96px;height:0.9px;background:#6a9955;opacity:0.4;"></div><div style="position:absolute;left:789.28px;top:224.55px;width:1.23px;height:0.9px;background:#6a9955;opacity:0.4;"></div><div style="position:absolute;left:791.34px;top:224.55px;width:4.78px;height:0.9px;background:#6a9955;opacity:0.4;"></div><div style="position:absolute;left:796.78px;top:224.55px;width:4.76px;height:0.9px;background:#6a9955;opacity:0.4;"></div><div style="position:absolute;left:802.19px;top:224.55px;width:2.28px;height:0.9px;background:#6a9955;opacity:0.4;"></div><div style="position:absolute;left:804.98px;top:224.55px;width:2.32px;height:0.9px;background:#6a9955;opacity:0.4;"></div><div style="position:absolute;left:807.76px;top:224.55px;width:2.81px;height:0.9px;background:#6a9955;opacity:0.4;"></div><div style="position:absolute;left:811.36px;top:224.55px;width:4.54px;height:0.9px;background:#6a9955;opacity:0.4;"></div><div style="position:absolute;left:816.72px;top:224.55px;width:1.78px;height:0.9px;background:#6a9955;opacity:0.4;"></div><div style="position:absolute;left:780.0px;top:226.35px;width:3.86px;height:0.9px;background:#cccccc;opacity:0.26;"></div><div style="position:absolute;left:784.5px;top:226.35px;width:4.98px;height:0.9px;background:#cccccc;opacity:0.26;"></div><div style="position:absolute;left:790.17px;top:226.35px;width:2.47px;height:0.9px;background:#cccccc;opacity:0.26;"></div><div style="position:absolute;left:793.39px;top:226.35px;width:5.83px;height:0.9px;background:#cccccc;opacity:0.26;"></div><div style="position:absolute;left:799.77px;top:226.35px;width:5.42px;height:0.9px;background:#cccccc;opacity:0.26;"></div><div style="position:absolute;left:805.65px;top:226.35px;width:2.45px;height:0.9px;background:#cccccc;opacity:0.26;"></div><div style="position:absolute;left:808.65px;top:226.35px;width:4.77px;height:0.9px;background:#cccccc;opacity:0.26;"></div><div style="position:absolute;left:814.3px;top:226.35px;width:4.2px;height:0.9px;background:#cccccc;opacity:0.26;"></div><div style="position:absolute;left:774.0px;top:229.05px;width:5.42px;height:0.9px;background:#6a9955;opacity:0.4;"></div><div style="position:absolute;left:780.02px;top:229.05px;width:2.35px;height:0.9px;background:#6a9955;opacity:0.4;"></div><div style="position:absolute;left:783.23px;top:229.05px;width:4.23px;height:0.9px;background:#6a9955;opacity:0.4;"></div><div style="position:absolute;left:788.22px;top:229.05px;width:4.39px;height:0.9px;background:#6a9955;opacity:0.4;"></div><div style="position:absolute;left:793.5px;top:229.05px;width:3.45px;height:0.9px;background:#6a9955;opacity:0.4;"></div><div style="position:absolute;left:797.78px;top:229.05px;width:4.55px;height:0.9px;background:#6a9955;opacity:0.4;"></div><div style="position:absolute;left:803.17px;top:229.05px;width:2.83px;height:0.9px;background:#6a9955;opacity:0.4;"></div><div style="position:absolute;left:776.0px;top:230.85px;width:3.94px;height:0.9px;background:#ce9178;opacity:0.34;"></div><div style="position:absolute;left:780.53px;top:230.85px;width:2.22px;height:0.9px;background:#ce9178;opacity:0.34;"></div><div style="position:absolute;left:783.47px;top:230.85px;width:1.57px;height:0.9px;background:#ce9178;opacity:0.34;"></div><div style="position:absolute;left:785.91px;top:230.85px;width:1.89px;height:0.9px;background:#ce9178;opacity:0.34;"></div><div style="position:absolute;left:788.26px;top:230.85px;width:1.71px;height:0.9px;background:#ce9178;opacity:0.34;"></div><div style="position:absolute;left:790.84px;top:230.85px;width:2.86px;height:0.9px;background:#ce9178;opacity:0.34;"></div><div style="position:absolute;left:794.21px;top:230.85px;width:1.34px;height:0.9px;background:#ce9178;opacity:0.34;"></div><div style="position:absolute;left:796.02px;top:230.85px;width:4.52px;height:0.9px;background:#ce9178;opacity:0.34;"></div><div style="position:absolute;left:801.28px;top:230.85px;width:4.55px;height:0.9px;background:#ce9178;opacity:0.34;"></div><div style="position:absolute;left:806.61px;top:230.85px;width:1.52px;height:0.9px;background:#ce9178;opacity:0.34;"></div><div style="position:absolute;left:808.84px;top:230.85px;width:2.94px;height:0.9px;background:#ce9178;opacity:0.34;"></div><div style="position:absolute;left:812.6px;top:230.85px;width:5.13px;height:0.9px;background:#ce9178;opacity:0.34;"></div><div style="position:absolute;left:774.0px;top:233.15px;width:1.52px;height:0.9px;background:#cccccc;opacity:0.26;"></div><div style="position:absolute;left:776.36px;top:233.15px;width:5.59px;height:0.9px;background:#cccccc;opacity:0.26;"></div><div style="position:absolute;left:782.82px;top:233.15px;width:1.71px;height:0.9px;background:#cccccc;opacity:0.26;"></div><div style="position:absolute;left:773.0px;top:236.25px;width:1.74px;height:0.9px;background:#cccccc;opacity:0.26;"></div><div style="position:absolute;left:775.2px;top:236.25px;width:5.27px;height:0.9px;background:#cccccc;opacity:0.26;"></div><div style="position:absolute;left:781.29px;top:236.25px;width:4.24px;height:0.9px;background:#cccccc;opacity:0.26;"></div><div style="position:absolute;left:786.35px;top:236.25px;width:4.23px;height:0.9px;background:#cccccc;opacity:0.26;"></div><div style="position:absolute;left:791.16px;top:236.25px;width:1.68px;height:0.9px;background:#cccccc;opacity:0.26;"></div><div style="position:absolute;left:793.34px;top:236.25px;width:4.84px;height:0.9px;background:#cccccc;opacity:0.26;"></div><div style="position:absolute;left:798.71px;top:236.25px;width:1.29px;height:0.9px;background:#cccccc;opacity:0.26;"></div><div style="position:absolute;left:774.0px;top:237.35px;width:1.3px;height:0.9px;background:#569cd6;opacity:0.34;"></div><div style="position:absolute;left:775.87px;top:237.35px;width:2.56px;height:0.9px;background:#569cd6;opacity:0.34;"></div><div style="position:absolute;left:774.0px;top:239.75px;width:2.97px;height:0.9px;background:#cccccc;opacity:0.26;"></div><div style="position:absolute;left:777.56px;top:239.75px;width:5.83px;height:0.9px;background:#cccccc;opacity:0.26;"></div><div style="position:absolute;left:784.06px;top:239.75px;width:5.29px;height:0.9px;background:#cccccc;opacity:0.26;"></div><div style="position:absolute;left:790.08px;top:239.75px;width:1.35px;height:0.9px;background:#cccccc;opacity:0.26;"></div><div style="position:absolute;left:792.06px;top:239.75px;width:3.29px;height:0.9px;background:#cccccc;opacity:0.26;"></div><div style="position:absolute;left:796.16px;top:239.75px;width:0.84px;height:0.9px;background:#cccccc;opacity:0.26;"></div><div style="position:absolute;left:775.0px;top:241.85px;width:3.78px;height:0.9px;background:#cccccc;opacity:0.26;"></div><div style="position:absolute;left:779.33px;top:241.85px;width:5.34px;height:0.9px;background:#cccccc;opacity:0.26;"></div><div style="position:absolute;left:785.16px;top:241.85px;width:5.14px;height:0.9px;background:#cccccc;opacity:0.26;"></div><div style="position:absolute;left:790.82px;top:241.85px;width:1.21px;height:0.9px;background:#cccccc;opacity:0.26;"></div><div style="position:absolute;left:792.57px;top:241.85px;width:2.43px;height:0.9px;background:#cccccc;opacity:0.26;"></div><div style="position:absolute;left:776.0px;top:243.15px;width:1.22px;height:0.9px;background:#cccccc;opacity:0.26;"></div><div style="position:absolute;left:777.89px;top:243.15px;width:3.56px;height:0.9px;background:#cccccc;opacity:0.26;"></div><div style="position:absolute;left:782.26px;top:243.15px;width:2.09px;height:0.9px;background:#cccccc;opacity:0.26;"></div><div style="position:absolute;left:776.0px;top:245.35px;width:2.87px;height:0.9px;background:#cccccc;opacity:0.26;"></div><div style="position:absolute;left:779.69px;top:245.35px;width:2.45px;height:0.9px;background:#cccccc;opacity:0.26;"></div><div style="position:absolute;left:783.02px;top:245.35px;width:2.56px;height:0.9px;background:#cccccc;opacity:0.26;"></div><div style="position:absolute;left:786.12px;top:245.35px;width:4.56px;height:0.9px;background:#cccccc;opacity:0.26;"></div><div style="position:absolute;left:791.36px;top:245.35px;width:1.73px;height:0.9px;background:#cccccc;opacity:0.26;"></div><div style="position:absolute;left:793.82px;top:245.35px;width:1.59px;height:0.9px;background:#cccccc;opacity:0.26;"></div><div style="position:absolute;left:796.21px;top:245.35px;width:4.55px;height:0.9px;background:#cccccc;opacity:0.26;"></div><div style="position:absolute;left:801.56px;top:245.35px;width:4.21px;height:0.9px;background:#cccccc;opacity:0.26;"></div><div style="position:absolute;left:806.39px;top:245.35px;width:1.61px;height:0.9px;background:#cccccc;opacity:0.26;"></div><div style="position:absolute;left:777.0px;top:247.45px;width:5.47px;height:0.9px;background:#569cd6;opacity:0.34;"></div><div style="position:absolute;left:782.96px;top:247.45px;width:2.04px;height:0.9px;background:#569cd6;opacity:0.34;"></div><div style="position:absolute;left:777.0px;top:250.05px;width:2.19px;height:0.9px;background:#6a9955;opacity:0.4;"></div><div style="position:absolute;left:779.76px;top:250.05px;width:5.53px;height:0.9px;background:#6a9955;opacity:0.4;"></div><div style="position:absolute;left:785.96px;top:250.05px;width:3.02px;height:0.9px;background:#6a9955;opacity:0.4;"></div><div style="position:absolute;left:789.83px;top:250.05px;width:2.32px;height:0.9px;background:#6a9955;opacity:0.4;"></div><div style="position:absolute;left:792.81px;top:250.05px;width:3.75px;height:0.9px;background:#6a9955;opacity:0.4;"></div><div style="position:absolute;left:797.35px;top:250.05px;width:4.81px;height:0.9px;background:#6a9955;opacity:0.4;"></div><div style="position:absolute;left:802.9px;top:250.05px;width:2.87px;height:0.9px;background:#6a9955;opacity:0.4;"></div><div style="position:absolute;left:806.37px;top:250.05px;width:1.95px;height:0.9px;background:#6a9955;opacity:0.4;"></div><div style="position:absolute;left:809.15px;top:250.05px;width:4.38px;height:0.9px;background:#6a9955;opacity:0.4;"></div><div style="position:absolute;left:814.31px;top:250.05px;width:2.01px;height:0.9px;background:#6a9955;opacity:0.4;"></div><div style="position:absolute;left:816.97px;top:250.05px;width:1.53px;height:0.9px;background:#6a9955;opacity:0.4;"></div><div style="position:absolute;left:777.0px;top:251.75px;width:1.81px;height:0.9px;background:#cccccc;opacity:0.26;"></div><div style="position:absolute;left:779.46px;top:251.75px;width:5.45px;height:0.9px;background:#cccccc;opacity:0.26;"></div><div style="position:absolute;left:785.47px;top:251.75px;width:2.12px;height:0.9px;background:#cccccc;opacity:0.26;"></div><div style="position:absolute;left:788.17px;top:251.75px;width:1.83px;height:0.9px;background:#cccccc;opacity:0.26;"></div><div style="position:absolute;left:777.0px;top:253.55px;width:1.94px;height:0.9px;background:#cccccc;opacity:0.26;"></div><div style="position:absolute;left:779.46px;top:253.55px;width:2.39px;height:0.9px;background:#cccccc;opacity:0.26;"></div><div style="position:absolute;left:782.45px;top:253.55px;width:3.71px;height:0.9px;background:#cccccc;opacity:0.26;"></div><div style="position:absolute;left:786.68px;top:253.55px;width:2.32px;height:0.9px;background:#cccccc;opacity:0.26;"></div><div style="position:absolute;left:777.0px;top:255.35px;width:5.0px;height:0.9px;background:#cccccc;opacity:0.26;"></div><div style="position:absolute;left:774.0px;top:259.15px;width:1.69px;height:0.9px;background:#6a9955;opacity:0.4;"></div><div style="position:absolute;left:776.57px;top:259.15px;width:1.69px;height:0.9px;background:#6a9955;opacity:0.4;"></div><div style="position:absolute;left:778.88px;top:259.15px;width:5.92px;height:0.9px;background:#6a9955;opacity:0.4;"></div><div style="position:absolute;left:785.61px;top:259.15px;width:0.39px;height:0.9px;background:#6a9955;opacity:0.4;"></div><div style="position:absolute;left:776.0px;top:260.05px;width:2.14px;height:0.9px;background:#cccccc;opacity:0.26;"></div><div style="position:absolute;left:778.88px;top:260.05px;width:1.71px;height:0.9px;background:#cccccc;opacity:0.26;"></div><div style="position:absolute;left:781.13px;top:260.05px;width:3.06px;height:0.9px;background:#cccccc;opacity:0.26;"></div><div style="position:absolute;left:784.66px;top:260.05px;width:3.12px;height:0.9px;background:#cccccc;opacity:0.26;"></div><div style="position:absolute;left:788.59px;top:260.05px;width:4.53px;height:0.9px;background:#cccccc;opacity:0.26;"></div><div style="position:absolute;left:776.0px;top:261.95px;width:4.24px;height:0.9px;background:#cccccc;opacity:0.26;"></div><div style="position:absolute;left:780.89px;top:261.95px;width:1.11px;height:0.9px;background:#cccccc;opacity:0.26;"></div><div style="position:absolute;left:776.0px;top:264.25px;width:3.14px;height:0.9px;background:#cccccc;opacity:0.26;"></div><div style="position:absolute;left:779.93px;top:264.25px;width:5.56px;height:0.9px;background:#cccccc;opacity:0.26;"></div><div style="position:absolute;left:786.13px;top:264.25px;width:3.96px;height:0.9px;background:#cccccc;opacity:0.26;"></div><div style="position:absolute;left:790.87px;top:264.25px;width:3.22px;height:0.9px;background:#cccccc;opacity:0.26;"></div><div style="position:absolute;left:794.64px;top:264.25px;width:2.36px;height:0.9px;background:#cccccc;opacity:0.26;"></div><div style="position:absolute;left:776.0px;top:266.05px;width:4.92px;height:0.9px;background:#cccccc;opacity:0.26;"></div><div style="position:absolute;left:781.68px;top:266.05px;width:0.32px;height:0.9px;background:#cccccc;opacity:0.26;"></div><div style="position:absolute;left:779.0px;top:268.15px;width:4.28px;height:0.9px;background:#ce9178;opacity:0.34;"></div><div style="position:absolute;left:783.93px;top:268.15px;width:2.7px;height:0.9px;background:#ce9178;opacity:0.34;"></div><div style="position:absolute;left:787.37px;top:268.15px;width:1.67px;height:0.9px;background:#ce9178;opacity:0.34;"></div><div style="position:absolute;left:789.68px;top:268.15px;width:4.96px;height:0.9px;background:#ce9178;opacity:0.34;"></div><div style="position:absolute;left:779.0px;top:269.55px;width:4.22px;height:0.9px;background:#ce9178;opacity:0.34;"></div><div style="position:absolute;left:783.78px;top:269.55px;width:3.23px;height:0.9px;background:#ce9178;opacity:0.34;"></div><div style="position:absolute;left:787.67px;top:269.55px;width:4.18px;height:0.9px;background:#ce9178;opacity:0.34;"></div><div style="position:absolute;left:792.49px;top:269.55px;width:2.51px;height:0.9px;background:#ce9178;opacity:0.34;"></div><div style="position:absolute;left:779.0px;top:270.75px;width:2.08px;height:0.9px;background:#cccccc;opacity:0.26;"></div><div style="position:absolute;left:781.82px;top:270.75px;width:4.94px;height:0.9px;background:#cccccc;opacity:0.26;"></div><div style="position:absolute;left:787.38px;top:270.75px;width:3.55px;height:0.9px;background:#cccccc;opacity:0.26;"></div><div style="position:absolute;left:791.82px;top:270.75px;width:1.38px;height:0.9px;background:#cccccc;opacity:0.26;"></div><div style="position:absolute;left:793.9px;top:270.75px;width:1.1px;height:0.9px;background:#cccccc;opacity:0.26;"></div><div style="position:absolute;left:779.0px;top:272.05px;width:5.71px;height:0.9px;background:#cccccc;opacity:0.26;"></div><div style="position:absolute;left:780.0px;top:275.35px;width:1.69px;height:0.9px;background:#ce9178;opacity:0.34;"></div><div style="position:absolute;left:782.39px;top:275.35px;width:3.8px;height:0.9px;background:#ce9178;opacity:0.34;"></div><div style="position:absolute;left:786.96px;top:275.35px;width:3.66px;height:0.9px;background:#ce9178;opacity:0.34;"></div><div style="position:absolute;left:791.36px;top:275.35px;width:5.18px;height:0.9px;background:#ce9178;opacity:0.34;"></div><div style="position:absolute;left:776.0px;top:276.55px;width:3.17px;height:0.9px;background:#cccccc;opacity:0.26;"></div><div style="position:absolute;left:780.05px;top:276.55px;width:2.21px;height:0.9px;background:#cccccc;opacity:0.26;"></div><div style="position:absolute;left:783.01px;top:276.55px;width:3.08px;height:0.9px;background:#cccccc;opacity:0.26;"></div><div style="position:absolute;left:786.89px;top:276.55px;width:1.79px;height:0.9px;background:#cccccc;opacity:0.26;"></div><div style="position:absolute;left:789.57px;top:276.55px;width:2.91px;height:0.9px;background:#cccccc;opacity:0.26;"></div><div style="position:absolute;left:777.0px;top:279.05px;width:2.52px;height:0.9px;background:#6a9955;opacity:0.4;"></div><div style="position:absolute;left:780.15px;top:279.05px;width:1.26px;height:0.9px;background:#6a9955;opacity:0.4;"></div><div style="position:absolute;left:782.05px;top:279.05px;width:2.95px;height:0.9px;background:#6a9955;opacity:0.4;"></div><div style="position:absolute;left:776.0px;top:281.15px;width:2.89px;height:0.9px;background:#cccccc;opacity:0.26;"></div><div style="position:absolute;left:779.46px;top:281.15px;width:2.28px;height:0.9px;background:#cccccc;opacity:0.26;"></div><div style="position:absolute;left:782.52px;top:281.15px;width:5.71px;height:0.9px;background:#cccccc;opacity:0.26;"></div><div style="position:absolute;left:788.92px;top:281.15px;width:2.25px;height:0.9px;background:#cccccc;opacity:0.26;"></div><div style="position:absolute;left:791.98px;top:281.15px;width:3.08px;height:0.9px;background:#cccccc;opacity:0.26;"></div><div style="position:absolute;left:795.61px;top:281.15px;width:1.82px;height:0.9px;background:#cccccc;opacity:0.26;"></div><div style="position:absolute;left:798.23px;top:281.15px;width:5.09px;height:0.9px;background:#cccccc;opacity:0.26;"></div><div style="position:absolute;left:776.0px;top:282.85px;width:3.45px;height:0.9px;background:#cccccc;opacity:0.26;"></div><div style="position:absolute;left:780.15px;top:282.85px;width:0.85px;height:0.9px;background:#cccccc;opacity:0.26;"></div><div style="position:absolute;left:781.0px;top:284.25px;width:2.9px;height:0.9px;background:#ce9178;opacity:0.34;"></div><div style="position:absolute;left:784.63px;top:284.25px;width:5.13px;height:0.9px;background:#ce9178;opacity:0.34;"></div><div style="position:absolute;left:790.58px;top:284.25px;width:2.42px;height:0.9px;background:#ce9178;opacity:0.34;"></div><div style="position:absolute;left:781.0px;top:285.55px;width:3.83px;height:0.9px;background:#cccccc;opacity:0.26;"></div><div style="position:absolute;left:785.34px;top:285.55px;width:5.2px;height:0.9px;background:#cccccc;opacity:0.26;"></div><div style="position:absolute;left:791.15px;top:285.55px;width:0.85px;height:0.9px;background:#cccccc;opacity:0.26;"></div><div style="position:absolute;left:779.0px;top:287.05px;width:3.01px;height:0.9px;background:#ce9178;opacity:0.34;"></div><div style="position:absolute;left:782.57px;top:287.05px;width:3.25px;height:0.9px;background:#ce9178;opacity:0.34;"></div><div style="position:absolute;left:786.35px;top:287.05px;width:1.21px;height:0.9px;background:#ce9178;opacity:0.34;"></div><div style="position:absolute;left:788.34px;top:287.05px;width:2.55px;height:0.9px;background:#ce9178;opacity:0.34;"></div><div style="position:absolute;left:791.45px;top:287.05px;width:0.55px;height:0.9px;background:#ce9178;opacity:0.34;"></div><div style="position:absolute;left:779.0px;top:288.55px;width:3.26px;height:0.9px;background:#cccccc;opacity:0.26;"></div><div style="position:absolute;left:782.99px;top:288.55px;width:4.36px;height:0.9px;background:#cccccc;opacity:0.26;"></div><div style="position:absolute;left:787.97px;top:288.55px;width:3.03px;height:0.9px;background:#cccccc;opacity:0.26;"></div><div style="position:absolute;left:779.0px;top:290.05px;width:1.47px;height:0.9px;background:#cccccc;opacity:0.26;"></div><div style="position:absolute;left:781.3px;top:290.05px;width:0.7px;height:0.9px;background:#cccccc;opacity:0.26;"></div><div style="position:absolute;left:781.0px;top:292.05px;width:1.87px;height:0.9px;background:#6a9955;opacity:0.4;"></div><div style="position:absolute;left:783.7px;top:292.05px;width:4.24px;height:0.9px;background:#6a9955;opacity:0.4;"></div><div style="position:absolute;left:788.39px;top:292.05px;width:1.26px;height:0.9px;background:#6a9955;opacity:0.4;"></div><div style="position:absolute;left:790.53px;top:292.05px;width:4.35px;height:0.9px;background:#6a9955;opacity:0.4;"></div><div style="position:absolute;left:795.44px;top:292.05px;width:1.69px;height:0.9px;background:#6a9955;opacity:0.4;"></div><div style="position:absolute;left:797.64px;top:292.05px;width:1.36px;height:0.9px;background:#6a9955;opacity:0.4;"></div><div style="position:absolute;left:776.0px;top:293.05px;width:2.86px;height:0.9px;background:#cccccc;opacity:0.26;"></div><div style="position:absolute;left:779.38px;top:293.05px;width:5.54px;height:0.9px;background:#cccccc;opacity:0.26;"></div><div style="position:absolute;left:785.73px;top:293.05px;width:2.01px;height:0.9px;background:#cccccc;opacity:0.26;"></div><div style="position:absolute;left:788.58px;top:293.05px;width:1.42px;height:0.9px;background:#cccccc;opacity:0.26;"></div><div style="position:absolute;left:781.0px;top:294.75px;width:4.41px;height:0.9px;background:#cccccc;opacity:0.26;"></div><div style="position:absolute;left:786.26px;top:294.75px;width:4.98px;height:0.9px;background:#cccccc;opacity:0.26;"></div><div style="position:absolute;left:792.07px;top:294.75px;width:2.15px;height:0.9px;background:#cccccc;opacity:0.26;"></div><div style="position:absolute;left:794.98px;top:294.75px;width:3.02px;height:0.9px;background:#cccccc;opacity:0.26;"></div><div style="position:absolute;left:777.0px;top:296.15px;width:3.31px;height:0.9px;background:#cccccc;opacity:0.26;"></div><div style="position:absolute;left:781.15px;top:296.15px;width:2.85px;height:0.9px;background:#cccccc;opacity:0.26;"></div><div style="position:absolute;left:777.0px;top:297.95px;width:2.32px;height:0.9px;background:#569cd6;opacity:0.34;"></div><div style="position:absolute;left:779.84px;top:297.95px;width:3.57px;height:0.9px;background:#569cd6;opacity:0.34;"></div><div style="position:absolute;left:783.88px;top:297.95px;width:3.44px;height:0.9px;background:#569cd6;opacity:0.34;"></div><div style="position:absolute;left:787.84px;top:297.95px;width:2.16px;height:0.9px;background:#569cd6;opacity:0.34;"></div><div style="position:absolute;left:777.0px;top:299.55px;width:3.79px;height:0.9px;background:#cccccc;opacity:0.26;"></div><div style="position:absolute;left:781.63px;top:299.55px;width:1.23px;height:0.9px;background:#cccccc;opacity:0.26;"></div><div style="position:absolute;left:783.69px;top:299.55px;width:3.45px;height:0.9px;background:#cccccc;opacity:0.26;"></div><div style="position:absolute;left:787.84px;top:299.55px;width:1.16px;height:0.9px;background:#cccccc;opacity:0.26;"></div><div style="position:absolute;left:777.0px;top:301.05px;width:3.0px;height:0.9px;background:#cccccc;opacity:0.26;"></div><div style="position:absolute;left:780.64px;top:301.05px;width:5.81px;height:0.9px;background:#cccccc;opacity:0.26;"></div><div style="position:absolute;left:786.93px;top:301.05px;width:1.07px;height:0.9px;background:#cccccc;opacity:0.26;"></div><div style="position:absolute;left:777.0px;top:302.05px;width:1.34px;height:0.9px;background:#cccccc;opacity:0.26;"></div><div style="position:absolute;left:779.06px;top:302.05px;width:1.94px;height:0.9px;background:#cccccc;opacity:0.26;"></div><div style="position:absolute;left:774.0px;top:303.85px;width:2.79px;height:0.9px;background:#6a9955;opacity:0.4;"></div><div style="position:absolute;left:777.68px;top:303.85px;width:3.65px;height:0.9px;background:#6a9955;opacity:0.4;"></div><div style="position:absolute;left:782.0px;top:303.85px;width:5.51px;height:0.9px;background:#6a9955;opacity:0.4;"></div><div style="position:absolute;left:776.0px;top:305.15px;width:4.65px;height:0.9px;background:#cccccc;opacity:0.26;"></div><div style="position:absolute;left:781.38px;top:305.15px;width:2.83px;height:0.9px;background:#cccccc;opacity:0.26;"></div><div style="position:absolute;left:785.04px;top:305.15px;width:2.96px;height:0.9px;background:#cccccc;opacity:0.26;"></div><div style="position:absolute;left:788.66px;top:305.15px;width:3.72px;height:0.9px;background:#cccccc;opacity:0.26;"></div><div style="position:absolute;left:793.18px;top:305.15px;width:0.82px;height:0.9px;background:#cccccc;opacity:0.26;"></div><div style="position:absolute;left:777.0px;top:306.55px;width:3.23px;height:0.9px;background:#cccccc;opacity:0.26;"></div><div style="position:absolute;left:776.0px;top:308.15px;width:5.17px;height:0.9px;background:#cccccc;opacity:0.26;"></div><div style="position:absolute;left:781.75px;top:308.15px;width:1.25px;height:0.9px;background:#cccccc;opacity:0.26;"></div><div style="position:absolute;left:776.0px;top:310.25px;width:3.62px;height:0.9px;background:#cccccc;opacity:0.26;"></div><div style="position:absolute;left:780.19px;top:310.25px;width:3.63px;height:0.9px;background:#cccccc;opacity:0.26;"></div><div style="position:absolute;left:784.71px;top:310.25px;width:4.34px;height:0.9px;background:#cccccc;opacity:0.26;"></div><div style="position:absolute;left:789.86px;top:310.25px;width:2.79px;height:0.9px;background:#cccccc;opacity:0.26;"></div><div style="position:absolute;left:793.24px;top:310.25px;width:2.64px;height:0.9px;background:#cccccc;opacity:0.26;"></div><div style="position:absolute;left:796.59px;top:310.25px;width:0.41px;height:0.9px;background:#cccccc;opacity:0.26;"></div><div style="position:absolute;left:776.0px;top:311.95px;width:1.39px;height:0.9px;background:#569cd6;opacity:0.34;"></div><div style="position:absolute;left:778.17px;top:311.95px;width:5.45px;height:0.9px;background:#569cd6;opacity:0.34;"></div><div style="position:absolute;left:784.31px;top:311.95px;width:1.44px;height:0.9px;background:#569cd6;opacity:0.34;"></div><div style="position:absolute;left:786.34px;top:311.95px;width:1.23px;height:0.9px;background:#569cd6;opacity:0.34;"></div><div style="position:absolute;left:788.1px;top:311.95px;width:5.62px;height:0.9px;background:#569cd6;opacity:0.34;"></div><div style="position:absolute;left:794.45px;top:311.95px;width:3.55px;height:0.9px;background:#569cd6;opacity:0.34;"></div><div style="position:absolute;left:776.0px;top:313.15px;width:5.57px;height:0.9px;background:#cccccc;opacity:0.26;"></div><div style="position:absolute;left:781.0px;top:314.55px;width:4.16px;height:0.9px;background:#ce9178;opacity:0.34;"></div><div style="position:absolute;left:785.89px;top:314.55px;width:4.54px;height:0.9px;background:#ce9178;opacity:0.34;"></div><div style="position:absolute;left:791.15px;top:314.55px;width:1.85px;height:0.9px;background:#ce9178;opacity:0.34;"></div><div style="position:absolute;left:779.0px;top:315.95px;width:4.4px;height:0.9px;background:#cccccc;opacity:0.26;"></div><div style="position:absolute;left:784.06px;top:315.95px;width:4.86px;height:0.9px;background:#cccccc;opacity:0.26;"></div><div style="position:absolute;left:789.41px;top:315.95px;width:2.07px;height:0.9px;background:#cccccc;opacity:0.26;"></div><div style="position:absolute;left:781.0px;top:317.25px;width:4.92px;height:0.9px;background:#ce9178;opacity:0.34;"></div><div style="position:absolute;left:786.78px;top:317.25px;width:4.35px;height:0.9px;background:#ce9178;opacity:0.34;"></div><div style="position:absolute;left:791.74px;top:317.25px;width:3.26px;height:0.9px;background:#ce9178;opacity:0.34;"></div><div style="position:absolute;left:779.0px;top:318.75px;width:3.9px;height:0.9px;background:#cccccc;opacity:0.26;"></div><div style="position:absolute;left:783.46px;top:318.75px;width:2.65px;height:0.9px;background:#cccccc;opacity:0.26;"></div><div style="position:absolute;left:786.75px;top:318.75px;width:2.73px;height:0.9px;background:#cccccc;opacity:0.26;"></div><div style="position:absolute;left:790.13px;top:318.75px;width:4.28px;height:0.9px;background:#cccccc;opacity:0.26;"></div><div style="position:absolute;left:781.0px;top:320.05px;width:1.46px;height:0.9px;background:#ce9178;opacity:0.34;"></div><div style="position:absolute;left:783.17px;top:320.05px;width:1.39px;height:0.9px;background:#ce9178;opacity:0.34;"></div><div style="position:absolute;left:785.06px;top:320.05px;width:5.09px;height:0.9px;background:#ce9178;opacity:0.34;"></div><div style="position:absolute;left:790.86px;top:320.05px;width:4.14px;height:0.9px;background:#ce9178;opacity:0.34;"></div><div style="position:absolute;left:779.0px;top:321.35px;width:1.27px;height:0.9px;background:#cccccc;opacity:0.26;"></div><div style="position:absolute;left:780.89px;top:321.35px;width:1.11px;height:0.9px;background:#cccccc;opacity:0.26;"></div><div style="position:absolute;left:781.0px;top:323.05px;width:5.91px;height:0.9px;background:#ce9178;opacity:0.34;"></div><div style="position:absolute;left:787.57px;top:323.05px;width:3.18px;height:0.9px;background:#ce9178;opacity:0.34;"></div><div style="position:absolute;left:791.25px;top:323.05px;width:4.29px;height:0.9px;background:#ce9178;opacity:0.34;"></div><div style="position:absolute;left:796.09px;top:323.05px;width:0.91px;height:0.9px;background:#ce9178;opacity:0.34;"></div><div style="position:absolute;left:776.0px;top:325.35px;width:1.22px;height:0.9px;background:#cccccc;opacity:0.26;"></div><div style="position:absolute;left:777.98px;top:325.35px;width:1.78px;height:0.9px;background:#cccccc;opacity:0.26;"></div><div style="position:absolute;left:780.0px;top:325.35px;width:1.62px;height:0.9px;background:#6a9955;opacity:0.4;"></div><div style="position:absolute;left:782.46px;top:325.35px;width:1.82px;height:0.9px;background:#6a9955;opacity:0.4;"></div><div style="position:absolute;left:784.74px;top:325.35px;width:4.65px;height:0.9px;background:#6a9955;opacity:0.4;"></div><div style="position:absolute;left:789.95px;top:325.35px;width:4.72px;height:0.9px;background:#6a9955;opacity:0.4;"></div><div style="position:absolute;left:795.21px;top:325.35px;width:1.44px;height:0.9px;background:#6a9955;opacity:0.4;"></div><div style="position:absolute;left:797.45px;top:325.35px;width:4.63px;height:0.9px;background:#6a9955;opacity:0.4;"></div><div style="position:absolute;left:802.91px;top:325.35px;width:4.7px;height:0.9px;background:#6a9955;opacity:0.4;"></div><div style="position:absolute;left:808.1px;top:325.35px;width:4.22px;height:0.9px;background:#6a9955;opacity:0.4;"></div><div style="position:absolute;left:813.08px;top:325.35px;width:3.41px;height:0.9px;background:#6a9955;opacity:0.4;"></div><div style="position:absolute;left:817.37px;top:325.35px;width:1.13px;height:0.9px;background:#6a9955;opacity:0.4;"></div><div style="position:absolute;left:777.0px;top:327.05px;width:4.64px;height:0.9px;background:#569cd6;opacity:0.34;"></div><div style="position:absolute;left:782.1px;top:327.05px;width:1.27px;height:0.9px;background:#569cd6;opacity:0.34;"></div><div style="position:absolute;left:784.11px;top:327.05px;width:5.12px;height:0.9px;background:#569cd6;opacity:0.34;"></div><div style="position:absolute;left:777.0px;top:328.15px;width:2.69px;height:0.9px;background:#cccccc;opacity:0.26;"></div><div style="position:absolute;left:780.47px;top:328.15px;width:2.0px;height:0.9px;background:#cccccc;opacity:0.26;"></div><div style="position:absolute;left:783.31px;top:328.15px;width:3.53px;height:0.9px;background:#cccccc;opacity:0.26;"></div><div style="position:absolute;left:787.32px;top:328.15px;width:1.68px;height:0.9px;background:#cccccc;opacity:0.26;"></div><div style="position:absolute;left:777.0px;top:329.55px;width:3.31px;height:0.9px;background:#569cd6;opacity:0.34;"></div><div style="position:absolute;left:781.06px;top:329.55px;width:1.9px;height:0.9px;background:#569cd6;opacity:0.34;"></div><div style="position:absolute;left:783.76px;top:329.55px;width:2.94px;height:0.9px;background:#569cd6;opacity:0.34;"></div><div style="position:absolute;left:787.45px;top:329.55px;width:1.55px;height:0.9px;background:#569cd6;opacity:0.34;"></div><div style="position:absolute;left:777.0px;top:331.05px;width:3.05px;height:0.9px;background:#cccccc;opacity:0.26;"></div><div style="position:absolute;left:780.86px;top:331.05px;width:5.74px;height:0.9px;background:#cccccc;opacity:0.26;"></div><div style="position:absolute;left:775.0px;top:333.15px;width:2.0px;height:0.9px;background:#cccccc;opacity:0.26;"></div><div style="position:absolute;left:771.0px;top:49.8px;width:1.0px;height:1.6px;background:#1b81a8;"></div><div style="position:absolute;left:771.0px;top:250.6px;width:1.0px;height:1.6px;background:#1b81a8;"></div><div style="position:absolute;left:771.0px;top:327.5px;width:1.0px;height:2.4px;background:#1b81a8;"></div><div style="position:absolute;left:821.8px;top:42px;width:0.6px;height:299px;background:#262626;"></div><div style="position:absolute;left:823.5px;top:61.2px;width:3.2px;height:2.6px;background:#1b81a8;"></div><div style="position:absolute;left:823.5px;top:240.8px;width:3.2px;height:2.6px;background:#1b81a8;"></div><div style="position:absolute;left:823.5px;top:307.6px;width:3.2px;height:2.6px;background:#1b81a8;"></div><div style="position:absolute;left:822.4px;top:204.4px;width:5.6px;height:1.2px;background:#5a5a5a;"></div><div style="position:absolute;left:823.8px;top:364.8px;width:0.9px;height:2.4px;background:#8a8a8a;"></div><div style="position:absolute;left:824.4px;top:366.6px;width:1.0px;height:0.7px;background:#5a6a78;"></div>
</div></body></html>
